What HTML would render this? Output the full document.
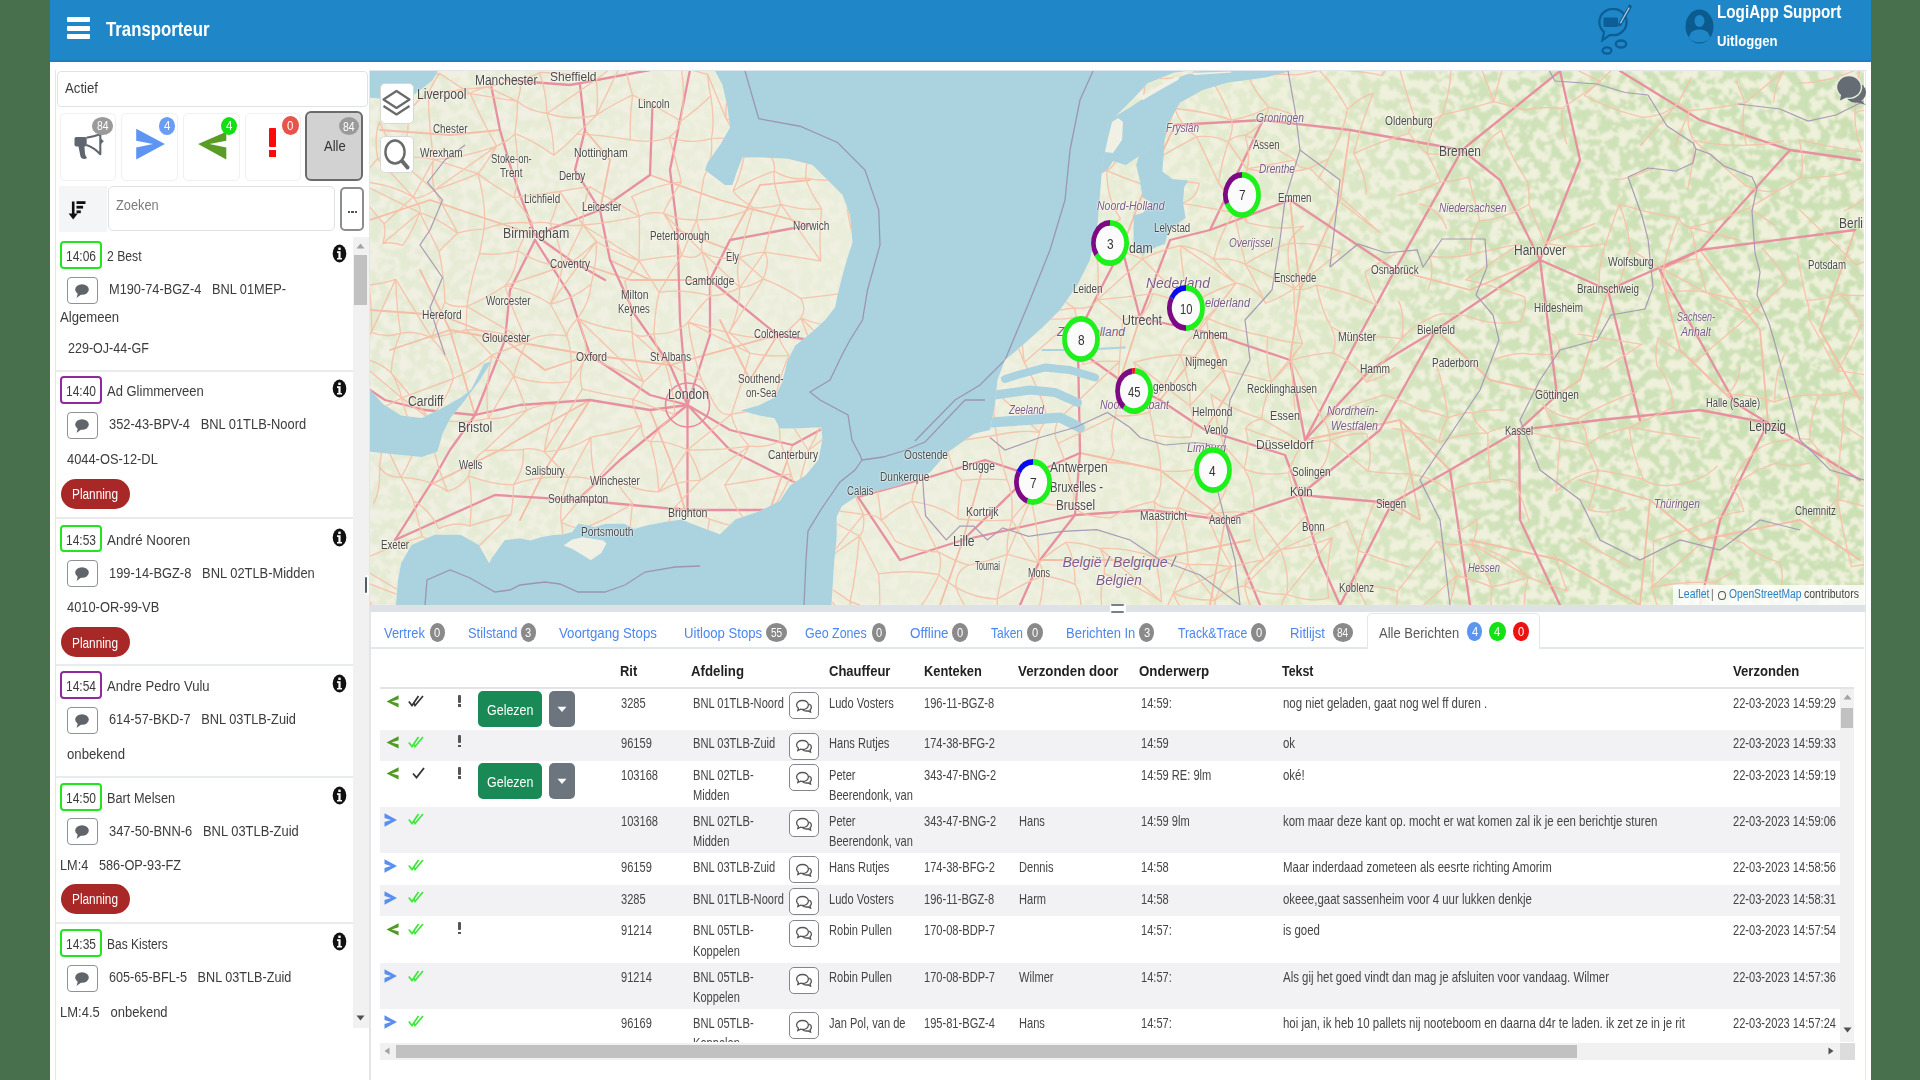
<!DOCTYPE html>
<html><head><meta charset="utf-8"><title>Transporteur</title><style>
*{margin:0;padding:0;box-sizing:border-box}
html,body{width:1920px;height:1080px;overflow:hidden}
body{position:relative;background:#48704c;font-family:"Liberation Sans",sans-serif}
.t{position:absolute;white-space:pre;line-height:1;transform-origin:0 0}
</style></head><body>
<div style="position:absolute;left:50px;top:0px;width:1821px;height:1080px;background:#fff"></div>
<div style="position:absolute;left:50px;top:0px;width:1821px;height:62px;background:#1f87c8"></div>
<div style="position:absolute;left:50px;top:60px;width:1821px;height:2px;background:#1a7fc2"></div>
<div style="position:absolute;left:67px;top:17px;width:23px;height:5px;background:#fff;border-radius:1px"></div>
<div style="position:absolute;left:67px;top:25.5px;width:23px;height:5px;background:#fff;border-radius:1px"></div>
<div style="position:absolute;left:67px;top:34.3px;width:23px;height:5px;background:#fff;border-radius:1px"></div>
<div class="t" style="left:106px;top:18.6px;font-size:20px;color:#fff;font-weight:bold;transform:scaleX(0.8382);">Transporteur</div>
<svg style="position:absolute;left:1590px;top:0" width="50" height="60" viewBox="0 0 50 60">
<g fill="none" stroke="#0c5f96" stroke-width="2.3">
<path d="M23 8.8c-7.6 0-13.6 5.9-13.6 13.2 0 4 1.7 7.5 4.6 10l-1.6 8.2 7.6-5.3c0.9 0.2 2 0.3 3 0.3 7.6 0 13.6-5.9 13.6-13.2S30.6 8.8 23 8.8Z"/>
<ellipse cx="17" cy="50.5" rx="4.4" ry="3.2"/>
<ellipse cx="31" cy="44" rx="5.2" ry="3.5"/>
</g>
<rect x="13.5" y="17.5" width="14.5" height="9.5" rx="1.2" fill="#0c5f96"/>
<path d="M29.8 24.5 L40 6.5" stroke="#0c5f96" stroke-width="3.6" stroke-linecap="round"/>
<path d="M30.4 23.3 L39.2 7.6" stroke="#b7c4cf" stroke-width="1.3"/>
</svg>
<svg style="position:absolute;left:1684px;top:9" width="32" height="36" viewBox="0 0 32 36">
<ellipse cx="15.5" cy="17.5" rx="14" ry="17" fill="#0b5b8f"/>
<ellipse cx="15.5" cy="12" rx="5" ry="6" fill="#1f87c8"/>
<path d="M4.8 28.5 C6.5 22.5 10 20.5 15.5 20.5 C21 20.5 24.5 22.5 26.2 28.5 C23.5 32.3 19.8 33.4 15.5 33.4 C11.2 33.4 7.5 32.3 4.8 28.5Z" fill="#1f87c8"/>
</svg>
<div class="t" style="left:1717px;top:3.45px;font-size:18px;color:#fff;font-weight:bold;transform:scaleX(0.8458);">LogiApp Support</div>
<div class="t" style="left:1717px;top:33.15px;font-size:15px;color:#fff;font-weight:bold;transform:scaleX(0.8748);">Uitloggen</div>
<svg style="position:absolute;left:370px;top:71px" width="1494" height="534" viewBox="370 71 1494 534"><rect x="370" y="71" width="1494" height="534" fill="#aad3df"/><g fill="none" stroke="#9a8fae" stroke-width="1.3" opacity="0.9"><polyline points="745,71 758.75,118.75 800,126.25 837.5,142.5 865,170 878.75,210 880,245 867.5,290 862.5,320 850,340 842,355 830,380 810,392 820,400 848,415 852,440 860,455 862,460 855,470 840,482 822,508 808,531 806,560 804,605"/><polyline points="862,460 883,457 903,451 925,442 965,400 985,400"/><polyline points="1093,71 1080,100 1070,150 1065,200 1050,250 1030,300 1005,360 980,385 955,400 915,441"/><polyline points="425,605 427,580 450,570 470,578 495,592 510,590 520,585 545,582 560,584 578,592 605,592 625,585 645,572 675,567 700,566"/></g><polygon points="370,71 715,71 722.5,85 727.5,107.5 730,127.5 720,145 707.5,162.5 705,170 715,177.5 725,185 732.5,185 737.5,170 742.5,157.5 762.5,157.5 787.5,158.75 812.5,165 825,177.5 842.5,195 850,215 852.5,242.5 847.5,257.5 842.5,275 837.5,295 835,307.5 825,320 812,332 795.2,345.6 787.4,361.1 782.2,381.9 774.5,397.4 758.9,405.2 740.7,410.4 758.9,415.6 774.5,418.2 779.6,428.5 795.2,428.5 821.1,427.2 822.4,438.9 818.5,459.6 805.6,475.2 790,485.6 779.6,501.1 758.9,511.5 735.6,519.3 720,534.2 697.1,525.8 681.5,519.6 665.8,521.7 645,525.8 634.6,529 624.2,523.75 613.75,523.75 605.4,523.75 595,526.9 584.6,524.8 578.3,523.75 572.1,532.1 563.75,534.2 551.25,535.2 540.8,537.3 530.4,540.4 520,538.3 504.8,540 491.8,558.1 489.2,563.3 478.9,545.1 460.7,534.8 434.8,534.8 411.5,545.1 401.1,563.3 398,580 395.9,605 370,605 370,451.8 395.9,454.4 421.8,457 437.4,451.8 442.6,433.7 450.4,418.1 463.3,402.5 480,380 491.8,361.1 484,363.7 471.1,389.6 460.7,397.4 442.6,407.8 421.8,418.1 401.1,415.5 383,403.9 370,389.6" fill="#f1f0e4"/><polygon points="370,71 437.5,71 432.5,80 420,90 410,97.5 395,100 370,97.5" fill="#aad3df"/><polygon points="563.75,545.6 572.1,539.4 582.5,537.3 603.3,540.4 606.5,543.5 601.25,552.9 590.8,560.2 582.5,555 572.1,548.75" fill="#f1f0e4"/><polygon points="1188,71 1174,72.75 1147.8,83.3 1135,97 1116,116 1107.5,125 1105,150 1102,170 1100,195 1097.5,225 1090,260 1077.5,285 1060,310 1042.5,327.5 1020,347.5 1005,360 997.5,380 995,405 990,430 974.1,433.7 948.2,451.9 930,472.6 898.9,485.6 878.2,490.7 857.4,495.9 841.9,506.3 836.7,516.7 836.7,537.4 834.1,563.3 831.5,605 1864,605 1864,71" fill="#f1f0e4"/><polygon points="1116,116 1130,107.5 1145,97.5 1165,85 1185,75 1202.5,71 1290,71 1265,77.5 1227.5,82.5 1202.5,90 1180,102.5 1170,120 1164.8,137.8 1154.4,146.8 1138.9,155.9 1125.9,165 1113,161 1107.8,168.9 1100,175 1100,120" fill="#aad3df"/><polygon points="1164.8,136 1163.5,155.9 1162.2,171.5 1172.6,179.2 1188.1,180.5 1184.2,187 1182.9,202.6 1185.5,218.1 1177.7,223.3 1167.4,233.7 1164.8,244 1157,246.6 1142.8,254.4 1133.7,251.8 1133.7,215.5 1142.8,212.9 1151.8,202.6 1142.8,197.4 1140.2,181.8 1136.3,165 1138.9,155.9 1154.4,146.8" fill="#aad3df"/><polygon points="1105,152 1108,138 1112,122 1118,118 1123,122 1122,140 1113,153" fill="#f1f0e4"/><polygon points="1140,97 1155,88 1175,77 1180,76 1178,80 1160,90 1143,100" fill="#f1f0e4"/><polygon points="1190,73 1230,71.5 1232,72.5 1195,75" fill="#f1f0e4"/></svg>
<svg style="position:absolute;left:370px;top:71px" width="1494" height="534" viewBox="370 71 1494 534"><defs><clipPath id="landclip"><polygon points="370,71 715,71 722.5,85 727.5,107.5 730,127.5 720,145 707.5,162.5 705,170 715,177.5 725,185 732.5,185 737.5,170 742.5,157.5 762.5,157.5 787.5,158.75 812.5,165 825,177.5 842.5,195 850,215 852.5,242.5 847.5,257.5 842.5,275 837.5,295 835,307.5 825,320 812,332 795.2,345.6 787.4,361.1 782.2,381.9 774.5,397.4 758.9,405.2 740.7,410.4 758.9,415.6 774.5,418.2 779.6,428.5 795.2,428.5 821.1,427.2 822.4,438.9 818.5,459.6 805.6,475.2 790,485.6 779.6,501.1 758.9,511.5 735.6,519.3 720,534.2 697.1,525.8 681.5,519.6 665.8,521.7 645,525.8 634.6,529 624.2,523.75 613.75,523.75 605.4,523.75 595,526.9 584.6,524.8 578.3,523.75 572.1,532.1 563.75,534.2 551.25,535.2 540.8,537.3 530.4,540.4 520,538.3 504.8,540 491.8,558.1 489.2,563.3 478.9,545.1 460.7,534.8 434.8,534.8 411.5,545.1 401.1,563.3 398,580 395.9,605 370,605 370,451.8 395.9,454.4 421.8,457 437.4,451.8 442.6,433.7 450.4,418.1 463.3,402.5 480,380 491.8,361.1 484,363.7 471.1,389.6 460.7,397.4 442.6,407.8 421.8,418.1 401.1,415.5 383,403.9 370,389.6"/><polygon points="1188,71 1174,72.75 1147.8,83.3 1135,97 1116,116 1107.5,125 1105,150 1102,170 1100,195 1097.5,225 1090,260 1077.5,285 1060,310 1042.5,327.5 1020,347.5 1005,360 997.5,380 995,405 990,430 974.1,433.7 948.2,451.9 930,472.6 898.9,485.6 878.2,490.7 857.4,495.9 841.9,506.3 836.7,516.7 836.7,537.4 834.1,563.3 831.5,605 1864,605 1864,71"/></clipPath><filter id="forest" x="0" y="0" width="100%" height="100%" color-interpolation-filters="sRGB"><feTurbulence type="fractalNoise" baseFrequency="0.1" numOctaves="4" seed="7"/><feColorMatrix type="matrix" values="0 0 0 0 0.78  0 0 0 0 0.87  0 0 0 0 0.69  1 0 0 0 0"/><feComponentTransfer><feFuncA type="discrete" tableValues="0 0 0 0 0 1 1 1 1 1"/></feComponentTransfer><feGaussianBlur stdDeviation="1.1"/></filter><linearGradient id="fgrad" x1="370" y1="0" x2="1864" y2="0" gradientUnits="userSpaceOnUse"><stop offset="0" stop-color="#fff" stop-opacity="0.3"/><stop offset="0.2" stop-color="#fff" stop-opacity="0.15"/><stop offset="0.45" stop-color="#fff" stop-opacity="0.12"/><stop offset="0.6" stop-color="#fff" stop-opacity="0.35"/><stop offset="0.75" stop-color="#fff" stop-opacity="0.8"/><stop offset="1" stop-color="#fff" stop-opacity="0.9"/></linearGradient><mask id="fmask"><rect x="370" y="71" width="1494" height="534" fill="url(#fgrad)"/></mask></defs><g clip-path="url(#landclip)"><linearGradient id="tgrad" x1="370" y1="0" x2="1864" y2="0" gradientUnits="userSpaceOnUse"><stop offset="0" stop-color="#eef1d8" stop-opacity="0.15"/><stop offset="0.42" stop-color="#eef1d8" stop-opacity="0.25"/><stop offset="0.6" stop-color="#eef1d8" stop-opacity="0.6"/><stop offset="1" stop-color="#eef1d8" stop-opacity="0.85"/></linearGradient><rect x="370" y="71" width="1494" height="534" fill="url(#tgrad)"/><g mask="url(#fmask)"><rect x="370" y="71" width="1494" height="534" filter="url(#forest)"/></g><g fill="none" stroke-linecap="round" stroke-linejoin="round"><polyline points="370,220 430,200 490,220 535,235" stroke="#f5bda6" stroke-width="1.8"/><polyline points="370,310 440,315 505,340 590,355" stroke="#f5bda6" stroke-width="1.8"/><polyline points="590,355 670,365 777.5,335" stroke="#f5bda6" stroke-width="1.8"/><polyline points="380,130 450,135 500,130" stroke="#f5bda6" stroke-width="1.8"/><polyline points="650,175 720,200 810,225" stroke="#f5bda6" stroke-width="1.8"/><polyline points="570,260 630,280 710,280" stroke="#f5bda6" stroke-width="1.8"/><polyline points="590,400 545,470 520,520" stroke="#f5bda6" stroke-width="1.8"/><polyline points="505,340 545,370 590,355" stroke="#f5bda6" stroke-width="1.8"/><polyline points="730,240 760,185 810,180" stroke="#f5bda6" stroke-width="1.8"/><polyline points="430,485 500,450 590,400" stroke="#f5bda6" stroke-width="1.8"/><polyline points="650,410 670,460 685,510" stroke="#f5bda6" stroke-width="1.8"/><polyline points="677.5,230 730,250" stroke="#f5bda6" stroke-width="1.8"/><polyline points="420,270 450,330 475,415" stroke="#f5bda6" stroke-width="1.8"/><polyline points="390,350 450,330 505,340" stroke="#f5bda6" stroke-width="1.8"/><polyline points="600,210 610,160 585,130" stroke="#f5bda6" stroke-width="1.8"/><polyline points="720,320 750,380 777.5,335" stroke="#f5bda6" stroke-width="1.8"/><polyline points="792.5,445 770,510" stroke="#f5bda6" stroke-width="1.8"/><polyline points="610,260 650,280 710,280" stroke="#f5bda6" stroke-width="1.8"/><polyline points="1160,400 1200,350 1210,333" stroke="#f5bda6" stroke-width="1.8"/><polyline points="1120,380 1140,318" stroke="#f5bda6" stroke-width="1.8"/><polyline points="1175,125 1140,200 1122,248" stroke="#f5bda6" stroke-width="1.8"/><polyline points="1080,453 1160,470 1225,520" stroke="#f5bda6" stroke-width="1.8"/><polyline points="1040,560 1150,560 1250,540" stroke="#f5bda6" stroke-width="1.8"/><polyline points="985,460 963,540 940,605" stroke="#f5bda6" stroke-width="1.8"/><polyline points="1305,440 1400,420 1450,470" stroke="#f5bda6" stroke-width="1.8"/><polyline points="1400,420 1420,520 1392,503" stroke="#f5bda6" stroke-width="1.8"/><polyline points="1210,333 1230,390 1205,430" stroke="#f5bda6" stroke-width="1.8"/><polyline points="1290,200 1300,290 1290,360" stroke="#f5bda6" stroke-width="1.8"/><polyline points="1395,270 1470,290 1540,260" stroke="#f5bda6" stroke-width="1.8"/><polyline points="1436,330 1490,380 1557,395" stroke="#f5bda6" stroke-width="1.8"/><polyline points="1608,290 1580,380 1557,395" stroke="#f5bda6" stroke-width="1.8"/><polyline points="1660,270 1680,350 1735,403" stroke="#f5bda6" stroke-width="1.8"/><polyline points="1700,250 1760,330 1768,423" stroke="#f5bda6" stroke-width="1.8"/><polyline points="1855,230 1820,330 1860,400" stroke="#f5bda6" stroke-width="1.8"/><polyline points="1650,500 1700,540 1800,520 1860,560" stroke="#f5bda6" stroke-width="1.8"/><polyline points="1580,480 1650,500 1640,605" stroke="#f5bda6" stroke-width="1.8"/><polyline points="1470,540 1560,560 1640,605" stroke="#f5bda6" stroke-width="1.8"/><polyline points="1225,520 1210,605" stroke="#f5bda6" stroke-width="1.8"/><polyline points="1300,290 1340,200 1350,130" stroke="#f5bda6" stroke-width="1.8"/><polyline points="580,85 585,130 575,170 600,210 610,260 635,315 670,365 687.5,405" stroke="#e8909f" stroke-width="2.3"/><polyline points="490,80 500,130 510,165 520,195 535,235 570,260 605,280" stroke="#e8909f" stroke-width="2.3"/><polyline points="535,240 510,290 505,340 475,415 450,450 430,485 395,540" stroke="#e8909f" stroke-width="2.3"/><polyline points="425,410 475,415 520,405 590,400 650,410 687.5,405" stroke="#e8909f" stroke-width="2.3"/><polyline points="535,240 570,295 590,355 650,395 687.5,405" stroke="#e8909f" stroke-width="2.3"/><polyline points="687.5,405 680,320 677.5,230 670,170 690,70" stroke="#e8909f" stroke-width="2.3"/><polyline points="687.5,405 710,335 710,280 730,240 810,225" stroke="#e8909f" stroke-width="2.3"/><polyline points="687.5,405 730,430 792.5,445 820,430" stroke="#e8909f" stroke-width="2.3"/><polyline points="687.5,405 730,450 770,470 810,490" stroke="#e8909f" stroke-width="2.3"/><polyline points="687.5,405 620,460 577.5,500" stroke="#e8909f" stroke-width="2.3"/><polyline points="687.5,405 687.5,510" stroke="#e8909f" stroke-width="2.3"/><polyline points="710,280 777.5,335 810,340" stroke="#e8909f" stroke-width="2.3"/><polyline points="505,80 570,85 650,70" stroke="#e8909f" stroke-width="2.3"/><polyline points="535,235 600,210 650,175 652.5,105" stroke="#e8909f" stroke-width="2.3"/><polyline points="395,540 495,495 577.5,500 685,510 770,510" stroke="#e8909f" stroke-width="2.3"/><polyline points="425,410 385,400 370,390" stroke="#e8909f" stroke-width="2.3"/><polyline points="1122,248 1140,318 1210,333 1290,360 1305,440" stroke="#e8909f" stroke-width="2.3"/><polyline points="1122,248 1100,290 1080,330 1078,350 1080,453 1075,515 1040,560 1020,605" stroke="#e8909f" stroke-width="2.3"/><polyline points="1078,350 1120,380 1160,400 1205,430 1285,455 1300,495 1320,560 1340,605" stroke="#e8909f" stroke-width="2.3"/><polyline points="1080,453 1030,475 985,460 920,480 858,497" stroke="#e8909f" stroke-width="2.3"/><polyline points="1075,515 1150,510 1225,520 1300,495" stroke="#e8909f" stroke-width="2.3"/><polyline points="963,540 1030,475" stroke="#e8909f" stroke-width="2.3"/><polyline points="963,540 1075,515" stroke="#e8909f" stroke-width="2.3"/><polyline points="858,497 900,560 963,540" stroke="#e8909f" stroke-width="2.3"/><polyline points="1140,318 1170,240 1210,230 1263,120" stroke="#e8909f" stroke-width="2.3"/><polyline points="1175,125 1263,120 1350,130 1462,150 1560,71" stroke="#e8909f" stroke-width="2.3"/><polyline points="1210,230 1290,200 1395,270 1462,150" stroke="#e8909f" stroke-width="2.3"/><polyline points="1395,270 1357,340 1305,440" stroke="#e8909f" stroke-width="2.3"/><polyline points="1540,260 1436,330 1370,370 1305,440" stroke="#e8909f" stroke-width="2.3"/><polyline points="1540,260 1608,290 1700,250 1855,230" stroke="#e8909f" stroke-width="2.3"/><polyline points="1540,260 1557,395 1519,430 1450,470 1392,503 1300,495" stroke="#e8909f" stroke-width="2.3"/><polyline points="1768,423 1735,403 1660,270 1700,250 1790,150 1860,160" stroke="#e8909f" stroke-width="2.3"/><polyline points="1540,260 1500,180 1462,150" stroke="#e8909f" stroke-width="2.3"/><polyline points="1540,260 1580,160 1560,71" stroke="#e8909f" stroke-width="2.3"/><polyline points="1519,430 1600,420 1700,410 1768,423 1860,480" stroke="#e8909f" stroke-width="2.3"/><polyline points="1519,430 1520,520 1560,605" stroke="#e8909f" stroke-width="2.3"/><polyline points="1450,470 1470,605" stroke="#e8909f" stroke-width="2.3"/><polyline points="1768,423 1720,520 1700,605" stroke="#e8909f" stroke-width="2.3"/><polyline points="1608,290 1640,420" stroke="#e8909f" stroke-width="2.3"/><polyline points="1300,495 1380,430 1436,330" stroke="#e8909f" stroke-width="2.3"/><polyline points="1225,520 1260,605" stroke="#e8909f" stroke-width="2.3"/><polyline points="1340,605 1392,503" stroke="#e8909f" stroke-width="2.3"/><polyline points="1620,71 1700,120 1790,150" stroke="#e8909f" stroke-width="2.3"/><path d="M373.9 78.7Q381.3 84.2 400.3 85.8M379.4 122.2Q394.0 117.5 408.3 113.7M379.4 122.2Q373.7 137.2 377.7 158.5M379.4 122.2L397.6 159.1M377.7 158.5Q384.0 155.9 397.6 159.1M377.7 158.5Q363.5 175.7 354.9 180.9M377.7 158.5L413.1 196.9M354.9 180.9Q390.2 183.1 413.1 196.9M354.9 180.9Q365.5 204.9 384.2 223.8M354.9 180.9L419.6 212.6M384.2 223.8Q386.1 233.0 382.8 243.6M384.2 223.8L413.1 196.9M382.8 243.6Q389.7 241.2 402.6 245.3M382.8 243.6L419.6 212.6M369.0 284.9Q387.2 283.0 395.7 279.1M369.0 284.9Q372.4 310.2 371.4 332.4M371.4 332.4Q385.2 338.1 400.6 333.3M371.4 332.4Q361.0 346.6 354.4 357.9M371.4 332.4L395.7 279.1M354.4 357.9Q376.0 358.9 391.1 372.7M354.4 357.9Q362.3 393.3 362.9 417.3M354.4 357.9L401.8 397.9M362.9 417.3Q379.4 409.8 401.8 397.9M362.9 417.3Q370.1 419.0 378.5 430.1M378.5 430.1Q402.8 440.0 417.2 440.4M378.5 430.1Q383.9 443.8 379.5 466.4M378.5 430.1L401.1 477.4M379.5 466.4Q384.9 477.3 401.1 477.4M379.5 466.4Q380.6 490.9 373.8 503.1M354.1 563.9Q387.5 547.2 422.2 536.7M354.1 563.9Q356.1 577.9 360.7 579.9M354.1 563.9L415.0 600.0M360.7 579.9Q387.0 591.6 415.0 600.0M360.7 579.9Q370.1 602.4 385.4 637.9M385.4 637.9Q388.5 637.7 391.6 635.2M400.3 85.8Q417.3 77.4 439.7 73.5M400.3 85.8Q399.5 105.8 408.3 113.7M408.3 113.7Q418.6 97.2 428.3 93.5M408.3 113.7Q409.8 140.4 397.6 159.1M397.6 159.1Q410.4 155.0 433.8 159.6M397.6 159.1L434.3 190.2M413.1 196.9Q418.2 200.5 434.3 190.2M413.1 196.9Q422.2 209.4 419.6 212.6M413.1 196.9L433.8 159.6M419.6 212.6Q435.5 216.8 457.7 233.1M419.6 212.6Q414.2 228.8 402.6 245.3M419.6 212.6L439.0 251.4M395.7 279.1Q396.5 307.2 400.6 333.3M395.7 279.1L431.5 337.9M400.6 333.3Q415.5 330.3 431.5 337.9M400.6 333.3Q392.3 351.2 391.1 372.7M391.1 372.7Q397.8 382.8 401.8 397.9M391.1 372.7L429.2 418.3M401.8 397.9Q420.5 412.2 429.2 418.3M401.8 397.9Q404.6 412.3 417.2 440.4M401.8 397.9L453.5 378.5M417.2 440.4Q421.3 434.3 430.9 435.9M417.2 440.4Q411.5 460.1 401.1 477.4M401.1 477.4Q430.2 479.1 447.5 491.4M401.1 477.4Q410.2 492.4 413.5 500.8M413.5 500.8Q428.9 508.8 438.9 528.6M413.5 500.8Q417.4 519.4 422.2 536.7M422.2 536.7Q433.5 541.7 445.4 546.0M415.0 600.0Q428.7 586.7 438.1 578.7M415.0 600.0Q402.9 619.0 391.6 635.2M415.0 600.0L445.4 546.0M391.6 635.2Q411.9 620.7 430.5 614.8M439.7 73.5Q434.0 80.6 428.3 93.5M439.7 73.5L470.2 93.6M428.3 93.5Q447.8 99.3 470.2 93.6M428.3 93.5Q429.0 129.3 433.8 159.6M428.3 93.5L487.1 86.9M433.8 159.6Q462.1 158.3 496.6 146.1M433.8 159.6Q430.6 174.6 434.3 190.2M433.8 159.6L478.0 173.6M434.3 190.2Q459.2 181.6 478.0 173.6M434.3 190.2Q449.8 218.1 457.7 233.1M434.3 190.2L496.6 146.1M457.7 233.1Q473.1 228.9 484.0 229.4M457.7 233.1Q446.5 243.9 439.0 251.4M439.0 251.4Q444.8 279.4 444.8 301.8M444.8 301.8Q449.6 307.6 466.8 306.3M444.8 301.8Q438.0 320.2 431.5 337.9M431.5 337.9Q454.9 333.1 466.0 329.8M431.5 337.9Q449.4 355.8 453.5 378.5M453.5 378.5Q476.6 369.0 491.8 355.2M453.5 378.5Q445.4 403.4 429.2 418.3M429.2 418.3Q461.6 424.7 488.4 418.4M429.2 418.3Q434.6 421.0 430.9 435.9M430.9 435.9Q436.9 467.4 447.5 491.4M447.5 491.4Q463.1 486.6 468.4 475.9M438.9 528.6Q455.2 521.0 469.8 526.0M445.4 546.0Q455.6 554.3 474.4 550.5M445.4 546.0Q439.0 566.7 438.1 578.7M438.1 578.7Q473.1 589.2 497.0 600.3M438.1 578.7Q430.9 594.8 430.5 614.8M438.1 578.7L496.2 624.5M430.5 614.8Q460.8 623.4 496.2 624.5M487.1 86.9Q499.4 84.4 517.6 78.3M487.1 86.9Q473.3 90.6 470.2 93.6M487.1 86.9L517.3 101.3M470.2 93.6Q488.2 96.6 517.3 101.3M470.2 93.6Q484.0 125.0 496.6 146.1M496.6 146.1Q511.3 138.8 514.9 133.7M496.6 146.1Q483.9 166.7 478.0 173.6M478.0 173.6Q489.1 182.9 514.1 197.6M478.0 173.6Q486.7 207.2 484.0 229.4M484.0 229.4Q505.6 220.4 532.7 223.1M484.0 229.4Q482.1 240.8 479.6 253.5M479.6 253.5Q496.1 256.0 518.0 250.8M479.6 253.5Q472.1 274.4 466.8 306.3M466.8 306.3Q486.1 298.4 504.9 285.7M466.8 306.3Q466.7 316.2 466.0 329.8M466.8 306.3L527.0 341.8M466.0 329.8Q495.2 328.9 527.0 341.8M466.0 329.8Q476.7 338.8 491.8 355.2M491.8 355.2Q507.6 365.4 513.6 376.2M491.8 355.2Q484.3 392.3 488.4 418.4M491.8 355.2L527.0 341.8M488.4 418.4Q501.2 419.8 526.8 410.2M488.4 418.4L513.6 376.2M485.2 450.2Q508.9 451.1 523.2 449.3M485.2 450.2Q473.1 457.0 468.4 475.9M485.2 450.2L526.8 410.2M468.4 475.9Q496.6 485.8 513.6 484.5M468.4 475.9Q473.1 495.8 469.8 526.0M469.8 526.0Q495.8 517.4 511.0 514.5M474.4 550.5L511.0 514.5M497.0 600.3Q506.4 607.5 511.4 603.3M497.0 600.3Q490.2 610.3 496.2 624.5M497.0 600.3L522.8 628.6M496.2 624.5Q509.7 624.8 522.8 628.6M517.6 78.3Q534.8 76.8 539.4 72.5M517.6 78.3Q523.5 83.3 517.3 101.3M517.3 101.3Q527.9 110.8 547.0 113.5M517.3 101.3Q517.7 117.2 514.9 133.7M514.9 133.7Q530.4 139.0 553.8 155.1M514.9 133.7Q520.8 172.0 514.1 197.6M514.1 197.6Q540.8 194.5 559.7 191.5M514.1 197.6Q528.8 216.3 532.7 223.1M532.7 223.1Q543.4 221.4 550.1 223.6M532.7 223.1Q522.6 238.4 518.0 250.8M518.0 250.8Q539.9 264.9 562.6 266.5M518.0 250.8Q515.5 274.3 504.9 285.7M504.9 285.7Q530.5 290.6 550.2 304.0M504.9 285.7Q511.1 307.0 527.0 341.8M504.9 285.7L562.6 266.5M527.0 341.8Q540.3 332.2 566.8 336.0M527.0 341.8Q518.3 358.1 513.6 376.2M513.6 376.2Q538.0 385.7 570.2 381.6M513.6 376.2Q521.3 395.2 526.8 410.2M526.8 410.2Q544.1 402.5 555.6 404.9M523.2 449.3Q531.3 447.3 544.3 451.8M523.2 449.3Q525.1 469.1 513.6 484.5M513.6 484.5Q538.0 475.0 569.0 477.3M513.6 484.5Q513.5 500.9 511.0 514.5M526.6 558.1Q542.7 553.4 562.4 541.5M526.6 558.1Q513.7 587.1 511.4 603.3M511.4 603.3Q538.9 598.5 564.0 591.6M511.4 603.3Q511.9 619.2 522.8 628.6M511.4 603.3L560.3 623.5M522.8 628.6Q545.0 629.7 560.3 623.5M539.4 72.5Q571.3 72.2 596.0 79.8M539.4 72.5Q545.9 89.8 547.0 113.5M547.0 113.5Q572.9 121.1 596.4 115.1M547.0 113.5Q553.7 133.4 553.8 155.1M547.0 113.5L596.0 79.8M553.8 155.1Q566.0 146.1 576.9 134.1M559.7 191.5Q576.7 187.9 590.1 186.8M559.7 191.5Q557.5 206.0 550.1 223.6M559.7 191.5L583.0 225.0M550.1 223.6Q569.2 226.5 583.0 225.0M550.1 223.6Q560.8 242.6 562.6 266.5M562.6 266.5Q578.4 259.4 596.2 241.3M562.6 266.5Q556.9 290.3 550.2 304.0M562.6 266.5L583.0 225.0M550.2 304.0Q571.1 300.2 591.1 284.2M550.2 304.0Q560.8 322.0 566.8 336.0M550.2 304.0L596.2 241.3M566.8 336.0Q567.0 329.7 577.7 318.3M566.8 336.0Q573.4 353.9 570.2 381.6M570.2 381.6Q581.8 367.0 586.2 356.8M570.2 381.6Q561.1 400.0 555.6 404.9M555.6 404.9Q546.7 431.6 544.3 451.8M544.3 451.8Q569.1 450.9 590.9 437.2M544.3 451.8Q551.7 460.4 569.0 477.3M544.3 451.8L582.2 389.1M569.0 477.3Q580.5 475.7 595.6 480.9M569.0 477.3Q559.1 500.5 561.1 522.0M569.0 477.3L590.9 437.2M561.1 522.0Q572.7 529.0 583.6 527.9M561.1 522.0Q563.7 532.7 562.4 541.5M561.1 522.0L595.6 480.9M562.4 541.5Q574.3 549.9 576.0 549.0M562.4 541.5Q568.7 568.1 564.0 591.6M564.0 591.6Q569.0 592.6 584.9 586.1M564.0 591.6Q561.7 604.3 560.3 623.5M560.3 623.5Q565.9 636.8 579.7 636.6M560.3 623.5L584.9 586.1M596.0 79.8Q613.7 66.4 625.0 56.2M596.0 79.8Q598.7 94.2 596.4 115.1M596.4 115.1Q610.6 105.7 632.6 95.0M596.4 115.1Q592.2 119.6 576.9 134.1M596.4 115.1L625.0 56.2M576.9 134.1Q598.2 134.4 630.4 139.9M590.1 186.8Q582.1 204.9 583.0 225.0M590.1 186.8L639.2 216.4M583.0 225.0Q606.4 223.2 639.2 216.4M583.0 225.0Q586.7 229.7 596.2 241.3M583.0 225.0L639.0 260.6M596.2 241.3Q611.7 251.3 639.0 260.6M596.2 241.3Q597.4 259.5 591.1 284.2M591.1 284.2Q590.4 300.9 577.7 318.3M577.7 318.3Q601.5 328.8 632.1 332.0M577.7 318.3Q587.3 340.4 586.2 356.8M577.7 318.3L643.6 382.0M586.2 356.8Q613.7 367.6 643.6 382.0M586.2 356.8Q577.2 372.5 582.2 389.1M582.2 389.1Q609.9 395.6 632.5 399.2M590.9 437.2Q622.4 431.8 641.6 425.0M590.9 437.2Q590.5 461.3 595.6 480.9M595.6 480.9L641.6 425.0M583.6 527.9Q605.9 520.3 632.7 503.5M583.6 527.9Q576.4 532.8 576.0 549.0M583.6 527.9L633.1 564.5M576.0 549.0Q608.0 552.5 633.1 564.5M576.0 549.0Q582.1 562.4 584.9 586.1M584.9 586.1Q585.5 608.1 579.7 636.6M579.7 636.6Q605.7 627.1 620.2 619.3M625.0 56.2Q649.0 62.7 681.1 67.2M625.0 56.2Q625.1 72.1 632.6 95.0M632.6 95.0Q662.6 109.7 680.8 121.2M632.6 95.0Q629.4 117.6 630.4 139.9M630.4 139.9Q651.9 143.7 669.1 137.3M631.6 196.7Q657.3 184.7 681.4 181.9M631.6 196.7Q635.4 202.3 639.2 216.4M639.2 216.4Q648.9 211.2 663.3 213.2M639.2 216.4Q639.8 235.7 639.0 260.6M639.0 260.6Q665.6 256.4 681.5 255.7M639.0 260.6Q632.8 273.4 624.8 281.5M639.0 260.6L659.2 292.3M624.8 281.5Q631.0 303.4 632.1 332.0M632.1 332.0Q638.5 339.4 653.9 333.9M632.1 332.0Q632.8 360.4 643.6 382.0M632.1 332.0L664.2 360.4M643.6 382.0Q660.7 367.1 664.2 360.4M643.6 382.0Q636.6 397.6 632.5 399.2M632.5 399.2Q648.6 406.0 675.0 414.5M632.5 399.2Q632.2 406.4 641.6 425.0M641.6 425.0Q639.9 436.4 650.4 442.0M616.5 480.1Q639.5 492.0 658.8 491.9M616.5 480.1Q618.6 486.8 632.7 503.5M632.7 503.5Q627.4 536.6 633.1 564.5M633.1 564.5Q649.5 556.7 658.6 541.0M633.1 564.5Q628.1 575.5 625.0 586.8M625.0 586.8Q652.9 591.1 681.6 582.4M625.0 586.8Q617.5 605.5 620.2 619.3M625.0 586.8L658.6 541.0M620.2 619.3L681.6 582.4M681.1 67.2Q692.7 70.3 707.6 74.3M681.1 67.2Q686.0 96.0 680.8 121.2M680.8 121.2Q699.9 107.0 710.8 95.8M680.8 121.2Q679.2 130.4 669.1 137.3M669.1 137.3Q692.6 144.8 711.3 138.6M669.1 137.3Q675.8 160.2 681.4 181.9M681.4 181.9Q669.1 200.1 663.3 213.2M663.3 213.2Q678.2 220.5 696.5 220.0M663.3 213.2Q676.9 231.6 681.5 255.7M663.3 213.2L701.9 251.6M681.5 255.7Q696.9 260.6 701.9 251.6M681.5 255.7Q666.7 279.3 659.2 292.3M681.5 255.7L696.5 220.0M659.2 292.3Q685.0 288.9 710.8 295.9M659.2 292.3Q655.1 307.8 653.9 333.9M653.9 333.9Q676.8 334.4 688.2 322.1M653.9 333.9Q655.9 350.8 664.2 360.4M664.2 360.4Q685.6 373.9 701.6 380.3M664.2 360.4Q673.1 385.2 675.0 414.5M675.0 414.5Q659.7 425.6 650.4 442.0M650.4 442.0Q663.4 439.2 687.5 449.9M650.4 442.0Q657.8 466.3 658.8 491.9M658.8 491.9Q678.4 479.7 700.7 480.4M658.8 491.9L687.5 449.9M675.0 506.9Q696.3 513.2 709.7 519.2M675.0 506.9Q670.3 518.9 658.6 541.0M675.0 506.9L700.7 480.4M658.6 541.0Q684.0 557.5 702.4 565.2M658.6 541.0Q668.5 564.9 681.6 582.4M681.6 582.4Q681.8 609.2 669.5 625.2M681.6 582.4L702.4 565.2M669.5 625.2Q691.0 616.1 714.3 616.3M707.6 74.3Q709.2 91.4 710.8 95.8M707.6 74.3L726.1 118.8M710.8 95.8Q715.0 124.1 711.3 138.6M711.3 138.6Q729.2 136.8 746.2 142.9M711.3 138.6Q713.6 158.1 704.1 176.8M704.1 176.8Q700.2 197.7 696.5 220.0M696.5 220.0Q730.5 219.2 753.1 207.6M696.5 220.0Q702.3 238.8 701.9 251.6M701.9 251.6Q716.5 260.9 739.3 257.6M701.9 251.6Q710.8 278.4 710.8 295.9M701.9 251.6L739.9 287.6M710.8 295.9Q727.4 294.7 739.9 287.6M710.8 295.9Q700.9 304.3 688.2 322.1M688.2 322.1Q709.4 328.4 728.9 332.7M688.2 322.1Q691.6 349.9 701.6 380.3M688.2 322.1L750.0 353.2M701.6 380.3Q709.4 395.5 715.4 405.5M715.4 405.5Q721.9 416.4 731.4 414.2M687.5 449.9Q716.2 450.8 749.3 446.2M687.5 449.9Q697.5 466.0 700.7 480.4M687.5 449.9L731.4 414.2M700.7 480.4L749.3 446.2M709.7 519.2Q727.1 525.7 755.3 530.9M709.7 519.2Q705.6 539.3 702.4 565.2M702.4 565.2Q719.9 549.0 746.4 537.6M702.4 565.2Q694.2 582.0 699.3 585.5M699.3 585.5Q719.8 581.8 750.9 580.0M699.3 585.5Q700.6 601.5 714.3 616.3M699.3 585.5L744.7 640.5M714.3 616.3Q734.3 623.9 744.7 640.5M733.5 81.6Q724.5 96.6 726.1 118.8M726.1 118.8Q750.6 126.2 770.4 121.4M726.1 118.8Q731.9 130.5 746.2 142.9M746.2 142.9Q762.7 148.3 765.8 148.5M746.2 142.9Q744.0 167.0 733.2 191.0M733.2 191.0Q749.7 179.5 774.2 171.2M733.2 191.0Q736.6 197.3 753.1 207.6M753.1 207.6Q766.4 208.8 780.9 204.4M753.1 207.6Q744.9 233.7 739.3 257.6M739.3 257.6Q754.8 252.7 764.5 252.1M739.3 257.6Q735.4 272.4 739.9 287.6M739.3 257.6L763.3 278.8M739.9 287.6Q751.1 286.9 763.3 278.8M739.9 287.6Q739.2 314.5 728.9 332.7M739.9 287.6L764.5 252.1M728.9 332.7Q749.1 339.3 779.4 337.8M728.9 332.7Q736.9 337.9 750.0 353.2M728.9 332.7L763.3 278.8M750.0 353.2Q770.9 357.1 789.1 355.3M750.0 353.2Q741.8 384.1 731.4 414.2M731.4 414.2Q757.6 411.2 774.8 398.1M731.4 414.2Q733.9 429.8 749.3 446.2M749.3 446.2Q768.2 448.1 780.2 440.7M749.3 446.2Q739.8 463.3 724.8 485.1M724.8 485.1Q763.1 479.2 791.0 474.0M724.8 485.1Q735.8 512.7 755.3 530.9M755.3 530.9Q752.1 533.7 746.4 537.6M746.4 537.6Q742.2 558.4 750.9 580.0M750.9 580.0Q760.4 594.9 777.2 602.1M750.9 580.0Q753.7 606.0 744.7 640.5M744.7 640.5Q760.7 630.8 778.8 629.9M783.8 59.3Q801.7 68.1 806.4 72.7M770.4 121.4Q788.3 123.4 806.1 116.0M770.4 121.4Q766.7 130.6 765.8 148.5M770.4 121.4L806.4 72.7M765.8 148.5Q786.7 143.5 814.5 133.3M765.8 148.5Q776.1 161.1 774.2 171.2M774.2 171.2Q791.1 181.3 805.5 177.9M774.2 171.2Q772.7 182.4 780.9 204.4M780.9 204.4Q805.7 211.3 821.6 208.7M780.9 204.4Q770.0 225.0 764.5 252.1M780.9 204.4L820.8 261.0M764.5 252.1Q790.4 255.9 820.8 261.0M764.5 252.1Q770.7 260.0 763.3 278.8M763.3 278.8Q782.6 285.9 800.7 298.4M779.4 337.8Q788.4 330.7 800.9 318.0M779.4 337.8Q781.2 345.1 789.1 355.3M789.1 355.3Q781.5 372.0 774.8 398.1M774.8 398.1Q804.3 397.9 826.1 403.4M774.8 398.1Q779.5 422.7 780.2 440.7M774.8 398.1L808.3 450.5M780.2 440.7Q784.3 452.1 791.0 474.0M791.0 474.0Q783.5 496.3 762.8 521.3M791.0 474.0L799.7 503.8M762.8 521.3Q775.0 506.7 799.7 503.8M762.8 521.3L798.9 485.2M765.8 556.2Q803.9 552.3 828.5 557.8M765.8 556.2Q767.7 575.1 777.2 602.1M777.2 602.1Q785.2 589.3 805.1 576.7M777.2 602.1Q782.0 621.7 778.8 629.9M778.8 629.9Q807.0 624.6 829.1 631.3M778.8 629.9L805.1 576.7M806.4 72.7Q809.6 94.3 806.1 116.0M806.1 116.0Q825.7 110.3 855.0 103.3M806.1 116.0Q813.1 122.4 814.5 133.3M806.1 116.0L861.3 59.5M814.5 133.3Q824.9 140.5 842.5 139.7M814.5 133.3Q807.1 149.6 805.5 177.9M805.5 177.9Q824.8 183.0 854.6 177.2M805.5 177.9Q809.6 191.9 821.6 208.7M821.6 208.7Q818.9 234.9 820.8 261.0M800.7 298.4Q827.8 295.5 860.7 290.9M800.7 298.4Q806.9 308.4 800.9 318.0M800.9 318.0Q827.6 329.1 862.3 330.6M800.9 318.0Q810.7 343.6 817.0 358.6M800.9 318.0L854.0 369.3M817.0 358.6Q831.3 366.8 854.0 369.3M817.0 358.6Q817.3 375.7 826.1 403.4M826.1 403.4Q822.1 427.9 808.3 450.5M826.1 403.4L854.0 369.3M808.3 450.5Q828.9 434.9 838.1 426.1M808.3 450.5Q804.6 461.6 798.9 485.2M798.9 485.2Q804.9 488.0 799.7 503.8M799.7 503.8Q830.9 510.3 863.5 514.4M799.7 503.8L859.3 536.0M828.5 557.8Q849.2 543.1 859.3 536.0M828.5 557.8Q816.9 564.6 805.1 576.7M828.5 557.8L863.5 514.4M805.1 576.7Q826.4 584.1 850.0 601.5M805.1 576.7L854.8 623.7M829.1 631.3Q839.9 620.9 854.8 623.7M861.3 59.5Q861.1 77.4 855.0 103.3M861.3 59.5L876.9 97.1M855.0 103.3Q872.3 99.6 876.9 97.1M855.0 103.3Q842.4 123.5 842.5 139.7M855.0 103.3L884.0 141.3M842.5 139.7Q866.2 138.3 884.0 141.3M842.5 139.7Q844.2 159.2 854.6 177.2M854.6 177.2Q850.6 190.8 847.3 207.4M847.3 207.4Q862.9 208.2 880.1 211.9M847.3 207.4Q850.0 231.8 861.6 260.7M847.3 207.4L877.2 249.2M861.6 260.7Q864.5 269.5 860.7 290.9M860.7 290.9Q864.6 293.1 879.5 292.4M860.7 290.9Q858.5 305.0 862.3 330.6M862.3 330.6Q861.5 334.6 873.0 343.6M862.3 330.6L883.8 381.0M854.0 369.3Q855.6 387.8 858.7 400.7M858.7 400.7Q879.6 411.0 894.0 409.6M858.7 400.7Q848.7 411.9 838.1 426.1M838.1 426.1Q862.7 446.2 887.1 455.3M838.1 426.1L894.0 409.6M841.5 463.3Q853.5 471.0 875.8 483.4M841.5 463.3Q852.5 490.8 863.5 514.4M863.5 514.4Q878.7 515.0 881.3 520.6M863.5 514.4Q865.0 531.9 859.3 536.0M859.3 536.0Q856.3 574.9 850.0 601.5M859.3 536.0L878.4 573.8M850.0 601.5Q851.3 616.7 854.8 623.7M850.0 601.5L879.4 612.5M854.8 623.7Q870.7 620.1 879.4 612.5M886.9 58.2Q911.3 66.3 921.8 86.2M886.9 58.2Q886.0 83.8 876.9 97.1M876.9 97.1Q902.3 101.9 920.7 102.0M876.9 97.1Q884.5 120.0 884.0 141.3M876.9 97.1L921.8 86.2M884.0 141.3Q898.5 134.0 924.0 138.1M884.0 141.3Q885.7 161.4 900.2 170.9M900.2 170.9Q916.1 181.5 932.4 189.0M900.2 170.9Q890.8 198.0 880.1 211.9M900.2 170.9L914.2 210.7M880.1 211.9Q891.7 204.5 914.2 210.7M880.1 211.9L932.4 189.0M877.2 249.2Q874.3 276.2 879.5 292.4M879.5 292.4Q907.4 287.9 929.7 290.8M879.5 292.4Q878.1 315.1 873.0 343.6M873.0 343.6Q909.8 335.6 940.2 314.2M873.0 343.6Q879.5 359.9 883.8 381.0M873.0 343.6L929.7 290.8M883.8 381.0Q897.4 377.7 910.9 375.9M883.8 381.0Q884.8 401.3 894.0 409.6M894.0 409.6Q901.6 405.4 922.1 389.4M887.1 455.3Q910.9 462.6 926.5 456.7M887.1 455.3Q888.1 468.9 875.8 483.4M875.8 483.4Q878.7 495.5 881.3 520.6M875.8 483.4L926.5 456.7M881.3 520.6Q898.1 506.4 912.0 501.3M881.3 520.6Q885.5 524.0 895.3 541.2M895.3 541.2Q919.3 552.7 937.8 551.7M878.4 573.8Q912.7 569.2 938.9 574.7M878.4 573.8Q880.5 590.6 879.4 612.5M879.4 612.5Q892.0 617.6 916.8 611.6M921.8 86.2Q944.9 78.3 958.7 56.9M921.8 86.2Q915.3 96.4 920.7 102.0M920.7 102.0Q942.1 105.8 954.2 105.0M920.7 102.0Q917.3 120.1 924.0 138.1M920.7 102.0L955.8 130.6M924.0 138.1Q923.5 165.2 932.4 189.0M914.2 210.7Q936.5 209.1 951.7 219.3M929.7 290.8Q939.4 282.3 948.7 287.0M929.7 290.8Q937.6 301.3 940.2 314.2M940.2 314.2Q948.0 327.0 949.5 331.3M910.9 375.9Q944.4 367.2 975.5 370.1M910.9 375.9Q913.0 386.7 922.1 389.4M922.1 389.4Q946.9 392.7 973.4 394.9M922.1 389.4Q922.2 429.5 926.5 456.7M922.1 389.4L975.5 370.1M926.5 456.7Q941.7 448.7 946.6 442.3M926.5 456.7Q927.5 466.4 925.6 473.2M926.5 456.7L973.4 394.9M925.6 473.2Q912.9 484.4 912.0 501.3M912.0 501.3Q941.6 505.8 958.1 519.0M912.0 501.3Q925.9 527.8 937.8 551.7M937.8 551.7Q957.4 562.6 969.2 565.2M937.8 551.7Q942.7 556.3 938.9 574.7M938.9 574.7Q941.6 577.7 955.8 587.4M938.9 574.7Q928.3 597.6 916.8 611.6M916.8 611.6Q938.2 610.0 972.4 617.2M958.7 56.9Q966.2 67.6 986.7 65.0M958.7 56.9Q960.0 79.9 954.2 105.0M954.2 105.0Q976.2 106.8 985.8 116.7M955.8 130.6Q989.3 137.0 1009.2 139.0M955.8 130.6Q952.4 163.1 947.2 197.1M947.2 197.1Q949.9 211.0 951.7 219.3M951.7 219.3Q966.0 209.6 990.8 205.7M951.7 219.3Q960.6 245.1 958.9 257.0M958.9 257.0Q975.9 254.1 996.7 258.5M958.9 257.0Q947.3 271.0 948.7 287.0M958.9 257.0L990.9 279.0M948.7 287.0Q964.7 278.8 990.9 279.0M948.7 287.0Q955.7 308.1 949.5 331.3M975.5 370.1Q987.7 362.8 989.4 360.2M975.5 370.1Q972.1 388.5 973.4 394.9M973.4 394.9Q981.9 396.4 995.0 391.2M973.4 394.9Q956.0 413.3 946.6 442.3M973.4 394.9L989.4 360.2M946.6 442.3Q976.2 438.5 996.5 435.0M946.6 442.3Q949.4 467.4 961.6 480.3M961.6 480.3Q987.3 478.3 1007.1 479.8M961.6 480.3Q957.8 503.3 958.1 519.0M958.1 519.0Q990.9 521.6 1011.7 519.9M969.2 565.2Q989.3 561.1 1007.3 554.4M969.2 565.2Q955.8 569.7 955.8 587.4M955.8 587.4Q975.7 598.6 997.1 599.1M955.8 587.4Q962.4 604.2 972.4 617.2M972.4 617.2Q994.0 629.4 1004.0 640.6M986.7 65.0Q988.8 87.5 985.8 116.7M1009.2 139.0Q1027.7 133.7 1032.2 133.2M1009.2 139.0Q991.5 151.2 987.2 168.6M987.2 168.6Q1003.0 163.3 1022.1 171.4M987.2 168.6Q987.0 181.7 990.8 205.7M990.8 205.7Q1008.4 209.8 1028.4 224.6M990.8 205.7Q995.2 231.9 996.7 258.5M996.7 258.5Q1006.3 245.1 1029.1 242.0M996.7 258.5Q989.4 264.2 990.9 279.0M990.9 279.0Q1017.5 287.8 1044.4 294.8M990.9 279.0Q1003.3 300.6 1005.4 315.5M990.9 279.0L1020.9 315.6M1005.4 315.5Q1006.6 318.7 1020.9 315.6M1005.4 315.5Q996.7 338.1 989.4 360.2M1005.4 315.5L1024.2 362.4M995.0 391.2Q991.9 408.1 996.5 435.0M995.0 391.2L1039.6 432.4M996.5 435.0Q1019.5 429.6 1039.6 432.4M996.5 435.0Q999.5 456.8 1007.1 479.8M1007.1 479.8Q1013.9 496.8 1011.7 519.9M1011.7 519.9Q1021.7 506.3 1030.6 499.4M1011.7 519.9Q1005.8 541.1 1007.3 554.4M1011.7 519.9L1038.7 562.5M1007.3 554.4Q1028.3 560.3 1038.7 562.5M1007.3 554.4Q1002.3 574.4 997.1 599.1M1007.3 554.4L1030.6 499.4M997.1 599.1Q1027.2 581.1 1043.3 576.0M997.1 599.1Q998.0 617.5 1004.0 640.6M1004.0 640.6Q1025.1 630.9 1037.0 615.5M1043.3 77.4Q1056.1 73.5 1079.7 69.3M1043.3 77.4Q1039.0 94.0 1028.6 118.0M1028.6 118.0Q1025.1 121.0 1032.2 133.2M1028.6 118.0L1079.7 69.3M1032.2 133.2Q1049.5 129.4 1060.8 139.1M1032.2 133.2Q1023.5 151.4 1022.1 171.4M1022.1 171.4Q1047.4 176.7 1086.3 180.8M1022.1 171.4Q1022.3 204.1 1028.4 224.6M1028.4 224.6Q1055.7 214.7 1070.9 217.1M1028.4 224.6Q1031.0 228.1 1029.1 242.0M1028.4 224.6L1081.6 270.0M1029.1 242.0Q1058.1 262.6 1081.6 270.0M1029.1 242.0Q1035.8 275.4 1044.4 294.8M1044.4 294.8Q1059.5 295.9 1074.0 308.0M1044.4 294.8Q1035.6 304.9 1020.9 315.6M1020.9 315.6Q1051.1 321.8 1076.1 317.3M1020.9 315.6Q1021.9 345.4 1024.2 362.4M1020.9 315.6L1074.0 308.0M1024.2 362.4Q1041.2 392.4 1047.5 418.4M1024.2 362.4L1076.1 317.3M1047.5 418.4Q1048.6 413.5 1058.7 419.3M1047.5 418.4Q1038.9 429.9 1039.6 432.4M1039.6 432.4Q1032.1 458.5 1033.7 473.6M1033.7 473.6Q1028.9 488.6 1030.6 499.4M1030.6 499.4Q1050.8 506.5 1069.6 505.9M1030.6 499.4Q1039.5 531.5 1038.7 562.5M1038.7 562.5Q1045.9 555.2 1065.9 542.4M1038.7 562.5Q1041.9 565.3 1043.3 576.0M1043.3 576.0Q1061.1 578.2 1075.0 584.4M1043.3 576.0Q1044.0 589.7 1037.0 615.5M1037.0 615.5Q1052.4 610.8 1081.0 617.7M1079.7 69.3Q1099.3 68.9 1105.3 62.9M1079.7 69.3Q1089.8 89.7 1087.0 117.4M1087.0 117.4Q1107.2 118.6 1125.4 118.9M1087.0 117.4Q1075.5 127.9 1060.8 139.1M1060.8 139.1Q1093.6 138.4 1121.2 148.8M1060.8 139.1Q1075.9 155.7 1086.3 180.8M1086.3 180.8Q1090.7 172.7 1106.8 170.6M1086.3 180.8Q1082.4 205.7 1070.9 217.1M1070.9 217.1Q1077.9 236.9 1081.6 270.0M1081.6 270.0Q1089.9 252.0 1095.2 245.4M1074.0 308.0Q1090.8 310.3 1097.2 300.0M1074.0 308.0Q1075.4 309.7 1076.1 317.3M1076.1 317.3Q1079.6 347.4 1083.1 364.4M1083.1 364.4Q1095.9 360.1 1119.5 361.4M1058.7 419.3Q1051.7 432.8 1058.1 443.5M1058.7 419.3L1119.5 361.4M1058.1 443.5Q1066.6 463.2 1072.4 490.2M1058.1 443.5L1115.9 415.6M1072.4 490.2Q1076.7 498.7 1069.6 505.9M1069.6 505.9Q1087.4 518.4 1110.4 517.8M1065.9 542.4Q1078.8 541.7 1099.9 548.5M1065.9 542.4Q1075.1 557.6 1075.0 584.4M1075.0 584.4Q1082.4 595.2 1081.0 617.7M1081.0 617.7Q1095.8 626.8 1104.0 622.3M1105.3 62.9Q1131.3 72.1 1146.2 77.5M1125.4 118.9Q1128.2 126.7 1143.8 123.4M1125.4 118.9Q1118.3 136.5 1121.2 148.8M1121.2 148.8Q1133.3 153.2 1157.1 158.6M1121.2 148.8Q1117.0 164.6 1106.8 170.6M1106.8 170.6Q1133.8 182.3 1153.2 187.4M1106.8 170.6Q1106.9 200.4 1120.6 218.7M1120.6 218.7Q1108.3 226.1 1095.2 245.4M1095.2 245.4Q1115.5 247.9 1142.6 259.0M1095.2 245.4Q1099.9 269.5 1097.2 300.0M1097.2 300.0Q1120.3 297.8 1152.7 293.7M1097.2 300.0Q1110.3 309.6 1122.8 320.4M1097.2 300.0L1142.6 259.0M1122.8 320.4Q1137.8 314.4 1140.1 316.5M1122.8 320.4Q1120.6 340.2 1119.5 361.4M1119.5 361.4Q1116.9 395.2 1115.9 415.6M1115.9 415.6Q1132.8 417.1 1149.6 412.3M1115.9 415.6Q1108.8 435.1 1113.9 450.6M1113.9 450.6Q1112.5 458.7 1106.0 462.3M1106.0 462.3Q1136.4 463.1 1160.7 470.8M1110.4 517.8Q1130.0 505.9 1153.9 501.3M1099.9 548.5Q1127.5 547.2 1155.1 557.4M1099.9 548.5Q1105.8 556.1 1104.2 573.9M1099.9 548.5L1161.6 601.7M1104.2 573.9Q1139.6 586.9 1161.6 601.7M1104.2 573.9Q1098.1 593.3 1104.0 622.3M1146.2 77.5Q1165.0 80.7 1191.6 74.6M1146.2 77.5Q1142.3 96.2 1143.8 123.4M1143.8 123.4Q1148.1 146.8 1157.1 158.6M1157.1 158.6Q1182.6 144.2 1196.7 136.7M1157.1 158.6L1174.7 108.5M1153.2 187.4Q1178.0 179.5 1199.2 183.4M1153.2 187.4Q1148.0 210.3 1148.2 228.6M1148.2 228.6Q1165.4 218.9 1180.6 203.1M1148.2 228.6Q1143.0 246.8 1142.6 259.0M1142.6 259.0Q1160.0 250.2 1180.5 245.7M1142.6 259.0L1188.9 305.8M1152.7 293.7Q1170.0 297.5 1188.9 305.8M1152.7 293.7Q1148.2 310.5 1140.1 316.5M1133.8 362.4Q1155.2 356.2 1180.4 354.5M1133.8 362.4Q1145.7 391.8 1149.6 412.3M1133.8 362.4L1190.0 405.7M1149.6 412.3Q1153.0 422.5 1153.9 434.8M1149.6 412.3L1180.4 354.5M1153.9 434.8Q1178.1 438.6 1190.9 437.0M1153.9 434.8Q1160.0 448.8 1160.7 470.8M1160.7 470.8Q1182.1 472.5 1196.4 468.8M1160.7 470.8Q1163.0 489.7 1153.9 501.3M1153.9 501.3Q1161.6 510.2 1177.8 507.6M1153.9 501.3Q1159.7 532.4 1155.1 557.4M1155.1 557.4Q1167.5 558.9 1187.9 564.7M1155.1 557.4Q1160.1 580.7 1161.6 601.7M1155.1 557.4L1177.8 507.6M1153.0 636.8Q1172.8 625.6 1192.5 617.2M1153.0 636.8L1173.4 593.2M1191.6 74.6Q1193.6 68.6 1207.0 73.1M1191.6 74.6Q1183.7 95.6 1174.7 108.5M1174.7 108.5Q1209.5 112.0 1231.6 120.1M1174.7 108.5Q1180.9 126.7 1196.7 136.7M1196.7 136.7Q1216.2 134.8 1228.3 142.3M1196.7 136.7L1218.6 182.9M1199.2 183.4Q1196.3 200.2 1180.6 203.1M1180.6 203.1Q1213.8 208.5 1234.0 212.7M1180.5 245.7Q1199.4 248.5 1214.0 259.4M1180.5 245.7Q1181.6 269.1 1188.9 305.8M1180.5 245.7L1235.9 283.0M1188.9 305.8Q1205.5 293.4 1235.9 283.0M1188.9 305.8Q1191.1 321.3 1197.1 333.6M1197.1 333.6Q1198.6 327.2 1206.0 317.7M1197.1 333.6Q1185.1 338.8 1180.4 354.5M1197.1 333.6L1235.9 283.0M1180.4 354.5Q1202.5 356.7 1223.0 370.3M1180.4 354.5Q1191.3 384.8 1190.0 405.7M1190.0 405.7Q1195.7 421.3 1190.9 437.0M1190.0 405.7L1223.0 370.3M1196.4 468.8Q1214.2 471.6 1227.1 485.3M1196.4 468.8Q1181.3 493.8 1177.8 507.6M1177.8 507.6Q1189.3 512.5 1207.0 514.5M1177.8 507.6Q1188.1 537.5 1187.9 564.7M1187.9 564.7Q1211.7 563.9 1231.7 566.6M1187.9 564.7Q1181.6 573.5 1173.4 593.2M1187.9 564.7L1215.2 600.2M1173.4 593.2Q1188.8 600.4 1215.2 600.2M1173.4 593.2Q1177.9 608.1 1192.5 617.2M1173.4 593.2L1231.7 566.6M1192.5 617.2Q1208.7 634.0 1225.6 639.7M1207.0 73.1Q1223.8 78.5 1249.3 77.3M1207.0 73.1Q1222.8 95.9 1231.6 120.1M1231.6 120.1Q1252.5 116.2 1268.9 107.3M1231.6 120.1Q1234.0 128.2 1228.3 142.3M1228.3 142.3Q1232.2 135.8 1245.2 135.2M1228.3 142.3Q1220.8 165.2 1218.6 182.9M1228.3 142.3L1247.0 169.0M1218.6 182.9Q1232.0 196.8 1234.0 212.7M1218.6 182.9L1246.9 222.7M1234.0 212.7Q1218.0 237.4 1214.0 259.4M1234.0 212.7L1245.4 264.3M1214.0 259.4Q1230.9 257.1 1245.4 264.3M1214.0 259.4Q1221.4 271.3 1235.9 283.0M1235.9 283.0Q1255.2 286.2 1265.6 303.1M1235.9 283.0Q1225.4 300.2 1206.0 317.7M1206.0 317.7Q1236.6 331.5 1267.7 336.8M1206.0 317.7Q1208.4 340.7 1223.0 370.3M1223.0 370.3Q1252.9 376.4 1271.6 381.6M1210.9 394.1Q1229.5 408.7 1262.0 418.9M1210.9 394.1Q1215.0 417.3 1224.0 445.7M1224.0 445.7Q1231.8 462.8 1227.1 485.3M1224.0 445.7L1244.1 468.6M1227.1 485.3Q1220.7 506.8 1207.0 514.5M1207.0 514.5Q1235.2 509.8 1254.0 513.7M1207.0 514.5Q1219.0 546.5 1231.7 566.6M1231.7 566.6Q1247.3 562.3 1263.8 559.8M1231.7 566.6Q1221.7 582.1 1215.2 600.2M1215.2 600.2Q1230.6 586.7 1244.7 585.9M1215.2 600.2Q1213.6 621.8 1225.6 639.7M1225.6 639.7Q1237.9 634.4 1259.4 622.0M1249.3 77.3Q1269.2 74.3 1282.8 74.1M1249.3 77.3Q1252.8 89.6 1268.9 107.3M1268.9 107.3Q1275.9 108.6 1291.0 113.9M1268.9 107.3Q1263.3 126.4 1245.2 135.2M1245.2 135.2Q1270.2 144.8 1294.9 159.8M1245.2 135.2Q1250.7 156.1 1247.0 169.0M1247.0 169.0Q1282.2 175.4 1309.2 168.3M1247.0 169.0Q1242.3 198.3 1246.9 222.7M1247.0 169.0L1294.9 159.8M1246.9 222.7Q1281.1 231.2 1303.3 226.1M1245.4 264.3Q1265.1 251.2 1288.5 243.7M1245.4 264.3Q1254.0 279.0 1265.6 303.1M1245.4 264.3L1294.3 288.3M1265.6 303.1Q1283.1 296.8 1294.3 288.3M1267.7 336.8Q1285.4 342.8 1302.6 343.4M1267.7 336.8Q1265.1 359.9 1271.6 381.6M1271.6 381.6Q1281.5 372.4 1291.2 360.3M1271.6 381.6Q1261.9 407.2 1262.0 418.9M1271.6 381.6L1302.6 343.4M1262.0 418.9Q1251.3 420.6 1245.3 428.3M1262.0 418.9L1304.2 443.4M1245.3 428.3Q1280.5 442.5 1304.2 443.4M1245.3 428.3Q1251.3 442.2 1244.1 468.6M1244.1 468.6Q1259.6 476.7 1288.5 472.8M1244.1 468.6Q1255.1 485.3 1254.0 513.7M1254.0 513.7Q1252.3 538.6 1263.8 559.8M1254.0 513.7L1280.6 549.5M1263.8 559.8Q1266.5 556.1 1280.6 549.5M1263.8 559.8Q1248.5 568.5 1244.7 585.9M1263.8 559.8L1306.1 515.6M1244.7 585.9Q1261.3 594.6 1286.6 594.3M1244.7 585.9Q1246.3 601.7 1259.4 622.0M1244.7 585.9L1280.6 549.5M1259.4 622.0Q1268.9 613.6 1281.3 618.7M1282.8 74.1Q1298.1 76.6 1319.1 70.3M1294.9 159.8Q1295.6 168.7 1309.2 168.3M1309.2 168.3Q1308.2 166.0 1318.9 177.4M1309.2 168.3L1328.4 158.9M1303.3 226.1Q1290.8 236.1 1288.5 243.7M1288.5 243.7Q1318.5 242.0 1340.5 251.6M1288.5 243.7Q1286.3 268.4 1294.3 288.3M1294.3 288.3Q1298.7 292.7 1316.5 285.0M1294.3 288.3Q1292.3 317.8 1302.6 343.4M1294.3 288.3L1340.5 251.6M1302.6 343.4Q1296.1 351.0 1291.2 360.3M1291.2 360.3Q1315.0 353.5 1332.5 352.7M1291.2 360.3Q1292.5 382.9 1295.0 410.3M1291.2 360.3L1323.0 419.2M1304.2 443.4Q1320.8 441.3 1330.2 440.1M1304.2 443.4Q1295.3 451.6 1288.5 472.8M1288.5 472.8Q1294.2 498.9 1306.1 515.6M1280.6 549.5Q1310.1 547.0 1332.3 537.7M1280.6 549.5Q1290.3 575.1 1286.6 594.3M1280.6 549.5L1346.6 521.0M1286.6 594.3Q1312.9 603.1 1328.6 597.9M1286.6 594.3Q1279.1 603.5 1281.3 618.7M1286.6 594.3L1332.3 537.7M1281.3 618.7Q1306.6 629.8 1329.9 629.0M1319.1 70.3Q1355.7 69.0 1381.9 75.6M1319.1 70.3Q1335.5 86.2 1347.5 109.3M1347.5 109.3Q1362.4 95.7 1373.3 93.2M1347.5 109.3Q1343.5 133.0 1328.4 158.9M1328.4 158.9Q1327.0 164.6 1318.9 177.4M1318.9 177.4L1379.4 232.3M1341.9 203.2Q1357.3 215.6 1379.4 232.3M1316.5 285.0Q1347.5 291.1 1377.2 305.5M1316.5 285.0Q1321.5 310.6 1330.7 326.3M1330.7 326.3Q1341.8 333.5 1357.7 339.0M1330.7 326.3Q1338.5 342.1 1332.5 352.7M1332.5 352.7Q1356.0 363.0 1366.5 382.1M1323.0 419.2Q1350.4 404.5 1384.8 394.9M1323.0 419.2Q1328.4 424.3 1330.2 440.1M1330.2 440.1Q1349.5 432.3 1366.5 433.7M1330.2 440.1Q1328.2 462.4 1318.7 470.9M1330.2 440.1L1368.0 471.2M1346.6 521.0L1358.4 550.6M1332.3 537.7Q1324.9 571.6 1328.6 597.9M1381.9 75.6Q1390.8 61.9 1396.3 55.6M1373.3 93.2Q1360.5 124.6 1353.8 153.6M1353.8 153.6Q1379.9 141.7 1409.2 133.4M1353.8 153.6Q1366.8 177.6 1366.2 194.0M1365.1 272.0Q1378.0 262.9 1395.9 253.7M1365.1 272.0Q1367.0 282.6 1377.2 305.5M1357.7 339.0Q1372.9 335.0 1401.9 338.8M1366.5 382.1Q1382.7 378.0 1394.9 367.6M1366.5 382.1L1401.9 338.8M1384.8 394.9Q1406.2 402.0 1421.2 410.5M1366.5 433.7Q1372.9 454.8 1368.0 471.2M1368.0 471.2Q1387.1 473.9 1410.6 474.0M1374.3 502.9Q1390.2 508.3 1401.8 514.3M1374.3 502.9Q1364.4 524.9 1358.4 550.6M1358.4 550.6Q1378.6 558.9 1408.6 566.9M1358.4 550.6Q1355.6 565.3 1355.4 585.2M1355.4 585.2Q1383.1 586.3 1397.7 591.2M1355.4 585.2Q1371.1 611.7 1381.7 638.3M1381.7 638.3Q1390.1 632.5 1398.4 627.5M1396.3 55.6Q1403.3 85.6 1416.5 122.7M1416.5 122.7Q1435.7 120.3 1442.4 114.6M1416.5 122.7Q1407.2 129.9 1409.2 133.4M1409.2 133.4Q1419.7 147.7 1427.3 153.7M1397.6 195.4Q1415.6 192.5 1440.4 182.1M1420.0 204.0Q1439.9 209.7 1446.5 228.4M1398.5 301.1Q1405.4 313.3 1401.9 338.8M1401.9 338.8Q1413.1 324.3 1438.1 314.7M1421.2 410.5Q1430.8 410.9 1448.0 417.6M1392.9 428.6Q1417.6 431.2 1438.9 442.0M1410.6 474.0Q1436.2 478.0 1449.8 492.0M1410.6 474.0Q1403.2 492.6 1401.8 514.3M1397.7 591.2Q1395.1 611.7 1398.4 627.5M1397.7 591.2L1436.7 541.3M1398.4 627.5L1456.8 575.5M1450.4 59.3Q1452.4 85.4 1442.4 114.6M1442.4 114.6Q1464.3 110.3 1493.6 101.6M1442.4 114.6Q1428.2 131.2 1427.3 153.7M1427.3 153.7Q1454.6 156.0 1481.7 155.5M1427.3 153.7Q1438.3 174.5 1440.4 182.1M1440.4 182.1Q1450.9 182.2 1468.4 177.2M1428.8 256.0Q1444.4 259.2 1470.6 254.5M1428.8 256.0Q1435.4 268.1 1428.2 289.3M1438.1 314.7Q1455.1 311.2 1474.9 318.6M1436.5 365.4Q1444.0 386.0 1448.0 417.6M1448.0 417.6Q1465.6 411.5 1472.8 413.1M1448.0 417.6Q1441.7 426.9 1438.9 442.0M1438.9 442.0Q1467.3 431.7 1487.7 433.4M1449.8 492.0Q1465.6 481.8 1490.5 482.0M1457.4 530.6Q1468.7 527.6 1476.4 519.1M1436.7 541.3Q1449.7 546.3 1471.9 544.4M1436.7 541.3Q1451.6 558.3 1456.8 575.5M1456.8 575.5Q1472.3 579.3 1492.0 587.0M1456.8 575.5Q1451.0 601.7 1441.4 633.6M1441.4 633.6Q1462.8 626.9 1492.7 615.7M1480.9 67.4Q1500.0 68.1 1505.4 56.7M1480.9 67.4Q1490.1 91.1 1493.6 101.6M1493.6 101.6Q1515.2 106.9 1524.7 110.0M1493.6 101.6L1505.4 56.7M1481.7 155.5Q1485.4 139.8 1501.3 130.4M1468.4 177.2Q1473.9 197.0 1479.8 221.1M1479.8 221.1Q1505.9 218.8 1528.9 204.3M1479.8 221.1Q1470.0 231.5 1470.6 254.5M1470.6 254.5Q1497.8 248.2 1519.8 243.8M1465.9 279.8Q1490.9 285.0 1524.1 296.6M1465.9 279.8L1519.8 243.8M1474.9 318.6Q1497.1 326.0 1520.6 321.1M1495.0 359.4Q1517.4 350.9 1531.4 354.6M1472.8 413.1Q1482.5 409.5 1503.0 409.9M1472.8 413.1Q1473.7 422.8 1487.7 433.4M1487.7 433.4Q1490.5 429.7 1504.0 427.1M1487.7 433.4Q1488.6 463.0 1490.5 482.0M1490.5 482.0Q1502.3 476.4 1515.7 482.8M1476.4 519.1Q1479.2 529.1 1471.9 544.4M1471.9 544.4Q1481.1 546.6 1503.2 556.6M1471.9 544.4Q1486.6 572.3 1492.0 587.0M1471.9 544.4L1528.0 576.9M1492.0 587.0Q1516.8 581.6 1528.0 576.9M1492.0 587.0Q1489.7 601.5 1492.7 615.7M1524.7 110.0Q1540.9 106.1 1562.3 108.5M1501.3 130.4Q1507.6 150.2 1527.4 181.8M1527.4 181.8Q1529.8 190.4 1528.9 204.3M1528.9 204.3L1544.6 242.8M1524.1 296.6Q1528.2 303.1 1520.6 321.1M1531.4 354.6Q1538.7 352.6 1558.8 356.6M1504.0 427.1Q1526.4 431.4 1560.0 439.3M1515.7 482.8Q1521.9 498.8 1529.5 522.1M1503.2 556.6Q1510.9 559.9 1528.0 576.9M1528.0 576.9Q1542.2 583.5 1566.8 590.8M1528.0 576.9Q1522.6 597.5 1525.1 618.3M1547.6 55.0Q1578.0 70.5 1600.1 81.7M1562.3 108.5Q1559.7 126.8 1566.9 143.9M1562.3 108.5L1600.1 81.7M1544.6 242.8Q1578.5 250.1 1605.6 243.7M1544.6 242.8L1595.1 223.5M1551.6 333.9Q1561.1 339.6 1558.8 356.6M1542.4 403.7Q1553.1 416.1 1576.6 419.1M1542.4 403.7Q1552.8 421.3 1560.0 439.3M1560.0 439.3Q1577.9 441.6 1587.3 445.4M1560.0 439.3Q1558.7 458.9 1556.3 491.2M1556.3 491.2Q1574.0 474.4 1598.2 470.3M1553.8 553.2Q1559.9 569.9 1566.8 590.8M1559.2 623.4Q1586.7 615.9 1602.8 612.0M1600.1 81.7Q1596.8 83.5 1584.4 95.5M1584.4 95.5Q1608.0 109.0 1642.2 117.3M1584.4 95.5L1621.6 60.8M1605.6 243.7Q1597.3 269.9 1599.6 287.8M1605.6 243.7L1619.2 203.9M1599.6 287.8Q1607.7 291.6 1615.5 293.4M1578.3 334.2Q1608.1 338.9 1641.9 344.3M1602.0 369.6L1641.9 344.3M1576.6 419.1Q1602.4 404.4 1636.6 391.7M1576.6 419.1Q1587.4 426.5 1587.3 445.4M1587.3 445.4Q1601.9 433.2 1629.2 427.7M1587.3 445.4Q1592.7 459.1 1598.2 470.3M1598.2 470.3Q1620.2 473.2 1643.6 479.4M1598.2 470.3Q1594.0 494.8 1588.1 509.5M1588.1 509.5Q1605.7 515.6 1626.0 507.7M1578.1 538.1Q1603.1 553.9 1629.6 567.1M1642.2 117.3Q1666.4 116.2 1678.4 102.4M1640.7 145.2L1678.4 102.4M1615.3 179.3Q1627.5 180.3 1653.5 167.7M1619.2 203.9Q1646.7 213.0 1679.0 217.9M1619.2 203.9Q1628.0 225.2 1630.1 249.3M1630.1 249.3Q1653.3 263.9 1663.2 269.4M1630.1 249.3Q1623.5 272.8 1615.5 293.4M1629.2 427.7Q1639.5 428.4 1653.3 431.5M1629.2 427.7Q1632.1 456.1 1643.6 479.4M1629.2 427.7L1673.3 407.4M1643.6 479.4Q1653.8 486.9 1671.2 485.3M1628.5 639.4Q1646.5 636.1 1668.8 637.4M1678.4 102.4Q1686.2 110.3 1689.4 110.6M1678.4 102.4L1691.2 77.4M1674.9 145.9L1689.4 110.6M1679.0 217.9Q1680.5 225.0 1689.9 227.5M1679.0 217.9Q1670.3 237.3 1663.2 269.4M1663.2 269.4Q1675.0 261.9 1696.8 258.9M1663.2 269.4Q1665.1 282.4 1667.4 293.0M1663.2 269.4L1706.5 292.6M1667.4 293.0Q1691.9 288.5 1706.5 292.6M1658.1 337.8Q1654.1 353.2 1657.2 366.1M1658.1 337.8L1695.0 361.7M1657.2 366.1Q1671.7 382.4 1673.3 407.4M1653.3 431.5Q1676.9 435.3 1699.4 438.3M1671.2 485.3Q1701.2 482.6 1717.2 466.1M1653.3 541.4Q1654.2 558.7 1651.9 587.3M1653.3 541.4L1707.0 523.2M1651.9 587.3Q1687.5 580.3 1716.2 583.0M1651.9 587.3Q1660.2 618.5 1668.8 637.4M1651.9 587.3L1709.3 536.0M1668.8 637.4Q1686.5 638.4 1713.3 631.2M1689.4 110.6Q1721.5 107.8 1744.6 102.9M1689.4 110.6Q1685.1 125.3 1694.1 140.4M1694.1 140.4Q1720.0 146.2 1746.4 145.2M1694.1 140.4Q1693.4 163.1 1687.7 189.1M1694.1 140.4L1745.8 185.7M1689.9 227.5Q1714.7 222.9 1748.5 208.1M1689.9 227.5Q1694.8 238.6 1696.8 258.9M1689.9 227.5L1738.8 240.0M1696.8 258.9Q1700.6 271.0 1706.5 292.6M1706.5 292.6Q1720.4 295.9 1748.3 301.7M1706.5 292.6L1749.8 315.4M1695.0 361.7L1749.8 315.4M1707.0 523.2Q1725.8 512.3 1743.8 511.3M1709.3 536.0Q1721.0 532.7 1743.6 543.3M1716.2 583.0Q1718.0 578.6 1731.8 573.3M1736.5 81.8Q1742.9 96.5 1744.6 102.9M1744.6 102.9Q1740.5 123.0 1746.4 145.2M1744.6 102.9L1783.8 71.1M1746.4 145.2Q1770.0 144.5 1783.5 140.9M1745.8 185.7Q1764.4 194.5 1779.1 190.2M1748.5 208.1Q1766.0 219.0 1774.2 225.0M1748.5 208.1L1779.1 190.2M1748.3 301.7L1761.8 314.5M1749.8 315.4L1786.9 281.7M1740.1 366.3Q1739.0 384.8 1726.8 394.5M1726.8 394.5Q1749.8 393.6 1774.7 402.0M1754.2 452.3Q1764.7 441.9 1785.7 440.3M1754.2 452.3Q1737.0 468.0 1730.6 488.5M1730.6 488.5Q1753.7 469.5 1776.7 462.8M1730.6 488.5Q1739.5 493.2 1743.8 511.3M1743.6 543.3Q1755.7 555.3 1780.0 562.7M1744.0 628.6Q1762.2 636.0 1787.2 629.8M1783.8 71.1Q1774.4 84.7 1773.9 101.8M1779.1 190.2Q1788.7 184.2 1800.2 177.8M1762.0 248.3Q1779.5 266.2 1786.9 281.7M1784.5 354.4Q1774.5 374.6 1774.7 402.0M1774.7 402.0Q1792.5 394.4 1819.1 394.9M1785.7 440.3Q1800.7 437.9 1809.9 439.4M1776.7 462.8Q1788.5 468.4 1810.1 462.8M1780.0 562.7Q1784.4 574.5 1779.7 595.9M1779.7 595.9Q1796.1 591.4 1818.9 597.4M1787.2 629.8Q1810.4 631.2 1824.9 639.3M1797.6 83.3Q1831.3 82.2 1859.4 68.3M1799.1 139.9Q1837.7 148.5 1862.2 151.8M1799.1 139.9Q1805.2 164.4 1800.2 177.8M1800.2 177.8Q1830.5 177.8 1848.2 172.1M1799.9 210.0L1855.8 264.6M1797.1 253.7Q1800.9 275.9 1806.6 300.3M1806.6 300.3Q1824.0 299.3 1840.1 294.1M1806.6 300.3Q1809.2 303.5 1809.4 319.3M1809.4 319.3L1837.0 370.4M1819.1 394.9Q1836.6 395.2 1845.6 392.6M1819.1 394.9Q1809.1 420.2 1809.9 439.4M1809.9 439.4L1838.8 475.6M1811.6 523.6Q1824.1 512.7 1837.4 499.2M1859.4 68.3Q1856.0 96.5 1855.1 113.1M1855.1 113.1Q1861.6 108.7 1872.9 111.3M1855.1 113.1Q1853.9 129.5 1862.2 151.8M1844.5 211.0L1896.7 180.4M1855.8 264.6Q1873.7 260.2 1888.2 245.5M1840.1 294.1Q1869.0 298.3 1884.6 291.1M1840.1 294.1Q1854.9 305.7 1860.9 325.7M1860.9 325.7Q1884.0 318.3 1897.3 321.3M1860.9 325.7Q1849.9 351.2 1837.0 370.4M1837.0 370.4Q1859.0 373.8 1880.4 377.1M1845.6 392.6Q1865.7 396.8 1873.3 405.2M1845.6 392.6Q1841.9 415.1 1843.2 425.2M1843.2 425.2Q1863.3 438.8 1878.0 446.3M1843.2 425.2Q1839.1 454.8 1838.8 475.6M1838.8 475.6Q1838.2 490.5 1837.4 499.2M1837.4 499.2Q1870.5 508.6 1894.4 512.0M1837.4 499.2Q1844.1 539.3 1851.6 566.6M1851.6 566.6Q1873.2 563.2 1881.3 563.4M1860.7 583.4Q1880.4 587.5 1895.9 582.9M1895.2 144.3Q1900.6 167.5 1896.7 180.4M1900.4 222.5Q1897.9 227.4 1888.2 245.5M1888.2 245.5Q1891.4 269.3 1884.6 291.1M1878.0 446.3Q1882.0 458.5 1890.0 465.0" stroke="#f5c2aa" stroke-width="1.35" opacity="0.95"/><circle cx="687.5" cy="405" r="22" stroke="#e8899e" stroke-width="1.6"/></g><polygon points="370,71 437.5,71 432.5,80 420,90 410,97.5 395,100 370,97.5" fill="#aad3df"/><polygon points="1116,116 1130,107.5 1145,97.5 1165,85 1185,75 1202.5,71 1290,71 1265,77.5 1227.5,82.5 1202.5,90 1180,102.5 1170,120 1164.8,137.8 1154.4,146.8 1138.9,155.9 1125.9,165 1113,161 1107.8,168.9 1100,175 1100,120" fill="#aad3df"/><polygon points="1164.8,136 1163.5,155.9 1162.2,171.5 1172.6,179.2 1188.1,180.5 1184.2,187 1182.9,202.6 1185.5,218.1 1177.7,223.3 1167.4,233.7 1164.8,244 1157,246.6 1142.8,254.4 1133.7,251.8 1133.7,215.5 1142.8,212.9 1151.8,202.6 1142.8,197.4 1140.2,181.8 1136.3,165 1138.9,155.9 1154.4,146.8" fill="#aad3df"/><polygon points="1105,152 1108,138 1112,122 1118,118 1123,122 1122,140 1113,153" fill="#f1f0e4"/><polygon points="1140,97 1155,88 1175,77 1180,76 1178,80 1160,90 1143,100" fill="#f1f0e4"/><polygon points="1190,73 1230,71.5 1232,72.5 1195,75" fill="#f1f0e4"/><polyline points="1042.5,350 1077.5,350 1125,347.5" fill="none" stroke="#aad3df" stroke-width="2" stroke-linecap="round" stroke-linejoin="round"/><polyline points="1005,379 1017.5,375 1045,367.5 1070,370 1095,377.5" fill="none" stroke="#aad3df" stroke-width="8" stroke-linecap="round" stroke-linejoin="round"/><polyline points="985,399 995,395 1030,390 1055,392.5 1077.5,402.5" fill="none" stroke="#aad3df" stroke-width="9" stroke-linecap="round" stroke-linejoin="round"/><polyline points="980,426 990,422.5 1027.5,420 1060,417.5 1080,427.5" fill="none" stroke="#aad3df" stroke-width="10" stroke-linecap="round" stroke-linejoin="round"/><g fill="none" stroke="#a89bb5" stroke-width="1.2"><polyline points="1628,177 1648,168 1676,171 1693,163 1696,149 1710,154 1724,166 1752,177 1757,188 1752,211 1755,253 1760,272 1757,295 1769,323 1774,340 1790,400 1800,440 1830,470 1864,480"/><polyline points="1628,177 1642,216 1648,239 1653,287 1645,309 1611,315 1597,340 1560,350 1540,380 1520,420 1540,470 1580,500 1600,540 1640,560 1680,540 1720,550 1760,520 1800,530"/><polyline points="1549,70 1555,81 1597,84 1625,92.5 1648,95 1667,126 1693,143 1696,149"/><polyline points="1738,104 1780,109 1808,121 1836,115 1864,101"/><polyline points="1330,267 1358,244 1386,253 1417,250 1423,267 1442,239 1485,239 1487,267 1476,295 1493,315 1499,340 1480,390 1460,420 1420,480 1440,520 1450,605"/><polyline points="1300,150 1340,180 1330,267"/><polyline points="1288,71 1295,110 1300,150 1285,200 1280,240 1272,290 1245,320 1250,360 1230,400 1225,440 1215,480 1225,520 1235,560 1240,605"/><polyline points="922.2,471.4 923.9,497 925.6,515.9 946.2,539.9 959.9,526.2 973.6,526.2 987.3,539.9 1002.7,527.9 1028.4,536.4 1062.6,531.3 1096.8,529.6 1130,540 1160,560 1200,575 1240,605"/><polyline points="990,437.5 1005,450 1040,437.5 1075,427.5 1107.5,412.5 1130,427.5 1140,437.5 1165,445 1195,442.5 1215,445"/><polyline points="465,145 445,160 427.5,182.5 442.5,200 430,230 420,245 442.5,277.5 430,307.5 440,340 445,355"/></g></g></svg>
<div class="t" style="left:474.5px;top:73.14px;font-size:14px;color:#4a4a4a;transform:scaleX(0.8543);text-shadow:0 0 2px #fff,0 0 2px #fff;">Manchester</div>
<div class="t" style="left:549.5px;top:69.88px;font-size:13px;color:#4a4a4a;transform:scaleX(0.9234);text-shadow:0 0 2px #fff,0 0 2px #fff;">Sheffield</div>
<div class="t" style="left:416.75px;top:86.89px;font-size:14px;color:#4a4a4a;transform:scaleX(0.8710);text-shadow:0 0 2px #fff,0 0 2px #fff;">Liverpool</div>
<div class="t" style="left:432.5px;top:123.37px;font-size:12px;color:#4a4a4a;transform:scaleX(0.8208);text-shadow:0 0 2px #fff,0 0 2px #fff;">Chester</div>
<div class="t" style="left:420px;top:147.37px;font-size:12px;color:#4a4a4a;transform:scaleX(0.8313);text-shadow:0 0 2px #fff,0 0 2px #fff;">Wrexham</div>
<div class="t" style="left:490.5px;top:153.37px;font-size:12px;color:#4a4a4a;transform:scaleX(0.7832);text-shadow:0 0 2px #fff,0 0 2px #fff;">Stoke-on-</div>
<div class="t" style="left:500px;top:166.62px;font-size:12px;color:#4a4a4a;transform:scaleX(0.8163);text-shadow:0 0 2px #fff,0 0 2px #fff;">Trent</div>
<div class="t" style="left:573.75px;top:146.62px;font-size:12px;color:#4a4a4a;transform:scaleX(0.8758);text-shadow:0 0 2px #fff,0 0 2px #fff;">Nottingham</div>
<div class="t" style="left:559.25px;top:170.37px;font-size:12px;color:#4a4a4a;transform:scaleX(0.8199);text-shadow:0 0 2px #fff,0 0 2px #fff;">Derby</div>
<div class="t" style="left:523.75px;top:192.87px;font-size:12px;color:#4a4a4a;transform:scaleX(0.8233);text-shadow:0 0 2px #fff,0 0 2px #fff;">Lichfield</div>
<div class="t" style="left:582px;top:201.12px;font-size:12px;color:#4a4a4a;transform:scaleX(0.8059);text-shadow:0 0 2px #fff,0 0 2px #fff;">Leicester</div>
<div class="t" style="left:502.5px;top:225.64px;font-size:14px;color:#4a4a4a;transform:scaleX(0.8868);text-shadow:0 0 2px #fff,0 0 2px #fff;">Birmingham</div>
<div class="t" style="left:549.5px;top:258.37px;font-size:12px;color:#4a4a4a;transform:scaleX(0.8328);text-shadow:0 0 2px #fff,0 0 2px #fff;">Coventry</div>
<div class="t" style="left:620.75px;top:289.12px;font-size:12px;color:#4a4a4a;transform:scaleX(0.8590);text-shadow:0 0 2px #fff,0 0 2px #fff;">Milton</div>
<div class="t" style="left:618.25px;top:302.87px;font-size:12px;color:#4a4a4a;transform:scaleX(0.7931);text-shadow:0 0 2px #fff,0 0 2px #fff;">Keynes</div>
<div class="t" style="left:485.5px;top:294.62px;font-size:12px;color:#4a4a4a;transform:scaleX(0.8170);text-shadow:0 0 2px #fff,0 0 2px #fff;">Worcester</div>
<div class="t" style="left:422px;top:309.12px;font-size:12px;color:#4a4a4a;transform:scaleX(0.8514);text-shadow:0 0 2px #fff,0 0 2px #fff;">Hereford</div>
<div class="t" style="left:637.5px;top:98.12px;font-size:12px;color:#4a4a4a;transform:scaleX(0.8283);text-shadow:0 0 2px #fff,0 0 2px #fff;">Lincoln</div>
<div class="t" style="left:650px;top:229.87px;font-size:12px;color:#4a4a4a;transform:scaleX(0.8180);text-shadow:0 0 2px #fff,0 0 2px #fff;">Peterborough</div>
<div class="t" style="left:725.75px;top:251.12px;font-size:12px;color:#4a4a4a;transform:scaleX(0.7798);text-shadow:0 0 2px #fff,0 0 2px #fff;">Ely</div>
<div class="t" style="left:793.25px;top:219.62px;font-size:12px;color:#4a4a4a;transform:scaleX(0.8363);text-shadow:0 0 2px #fff,0 0 2px #fff;">Norwich</div>
<div class="t" style="left:685px;top:275.37px;font-size:12px;color:#4a4a4a;transform:scaleX(0.8390);text-shadow:0 0 2px #fff,0 0 2px #fff;">Cambridge</div>
<div class="t" style="left:753.75px;top:327.87px;font-size:12px;color:#4a4a4a;transform:scaleX(0.8063);text-shadow:0 0 2px #fff,0 0 2px #fff;">Colchester</div>
<div class="t" style="left:650px;top:351.12px;font-size:12px;color:#4a4a4a;transform:scaleX(0.8086);text-shadow:0 0 2px #fff,0 0 2px #fff;">St Albans</div>
<div class="t" style="left:668px;top:387.44px;font-size:14px;color:#4a4a4a;transform:scaleX(0.8776);text-shadow:0 0 2px #fff,0 0 2px #fff;">London</div>
<div class="t" style="left:738px;top:373.12px;font-size:12px;color:#4a4a4a;transform:scaleX(0.8214);text-shadow:0 0 2px #fff,0 0 2px #fff;">Southend-</div>
<div class="t" style="left:746px;top:387.12px;font-size:12px;color:#4a4a4a;transform:scaleX(0.7881);text-shadow:0 0 2px #fff,0 0 2px #fff;">on-Sea</div>
<div class="t" style="left:768px;top:449.12px;font-size:12px;color:#4a4a4a;transform:scaleX(0.8421);text-shadow:0 0 2px #fff,0 0 2px #fff;">Canterbury</div>
<div class="t" style="left:668px;top:506.92px;font-size:12px;color:#4a4a4a;transform:scaleX(0.8836);text-shadow:0 0 2px #fff,0 0 2px #fff;">Brighton</div>
<div class="t" style="left:481.5px;top:332.42px;font-size:12px;color:#4a4a4a;transform:scaleX(0.8254);text-shadow:0 0 2px #fff,0 0 2px #fff;">Gloucester</div>
<div class="t" style="left:575.5px;top:351.32px;font-size:12px;color:#4a4a4a;transform:scaleX(0.8580);text-shadow:0 0 2px #fff,0 0 2px #fff;">Oxford</div>
<div class="t" style="left:407.6px;top:393.64px;font-size:14px;color:#4a4a4a;transform:scaleX(0.8637);text-shadow:0 0 2px #fff,0 0 2px #fff;">Cardiff</div>
<div class="t" style="left:458px;top:419.54px;font-size:14px;color:#4a4a4a;transform:scaleX(0.8816);text-shadow:0 0 2px #fff,0 0 2px #fff;">Bristol</div>
<div class="t" style="left:459.4px;top:458.92px;font-size:12px;color:#4a4a4a;transform:scaleX(0.8034);text-shadow:0 0 2px #fff,0 0 2px #fff;">Wells</div>
<div class="t" style="left:524.7px;top:465.42px;font-size:12px;color:#4a4a4a;transform:scaleX(0.8043);text-shadow:0 0 2px #fff,0 0 2px #fff;">Salisbury</div>
<div class="t" style="left:589.8px;top:475.12px;font-size:12px;color:#4a4a4a;transform:scaleX(0.8296);text-shadow:0 0 2px #fff,0 0 2px #fff;">Winchester</div>
<div class="t" style="left:548.3px;top:493.12px;font-size:12px;color:#4a4a4a;transform:scaleX(0.8432);text-shadow:0 0 2px #fff,0 0 2px #fff;">Southampton</div>
<div class="t" style="left:580.5px;top:526.32px;font-size:12px;color:#4a4a4a;transform:scaleX(0.8556);text-shadow:0 0 2px #fff,0 0 2px #fff;">Portsmouth</div>
<div class="t" style="left:381px;top:539.12px;font-size:12px;color:#4a4a4a;transform:scaleX(0.8072);text-shadow:0 0 2px #fff,0 0 2px #fff;">Exeter</div>
<div class="t" style="left:904px;top:449.12px;font-size:12px;color:#4a4a4a;transform:scaleX(0.8454);text-shadow:0 0 2px #fff,0 0 2px #fff;">Oostende</div>
<div class="t" style="left:962px;top:460.12px;font-size:12px;color:#4a4a4a;transform:scaleX(0.8526);text-shadow:0 0 2px #fff,0 0 2px #fff;">Brugge</div>
<div class="t" style="left:880px;top:471.12px;font-size:12px;color:#4a4a4a;transform:scaleX(0.8430);text-shadow:0 0 2px #fff,0 0 2px #fff;">Dunkerque</div>
<div class="t" style="left:846.5px;top:485.42px;font-size:12px;color:#4a4a4a;transform:scaleX(0.7944);text-shadow:0 0 2px #fff,0 0 2px #fff;">Calais</div>
<div class="t" style="left:965.5px;top:505.62px;font-size:12px;color:#4a4a4a;transform:scaleX(0.8703);text-shadow:0 0 2px #fff,0 0 2px #fff;">Kortrijk</div>
<div class="t" style="left:953px;top:534.44px;font-size:14px;color:#4a4a4a;transform:scaleX(0.8673);text-shadow:0 0 2px #fff,0 0 2px #fff;">Lille</div>
<div class="t" style="left:975px;top:559.52px;font-size:12px;color:#4a4a4a;transform:scaleX(0.6352);text-shadow:0 0 2px #fff,0 0 2px #fff;">Tournai</div>
<div class="t" style="left:1028px;top:567.12px;font-size:12px;color:#4a4a4a;transform:scaleX(0.7497);text-shadow:0 0 2px #fff,0 0 2px #fff;">Mons</div>
<div class="t" style="left:1050.4px;top:459.54px;font-size:14px;color:#4a4a4a;transform:scaleX(0.8605);text-shadow:0 0 2px #fff,0 0 2px #fff;">Antwerpen</div>
<div class="t" style="left:1050px;top:479.74px;font-size:14px;color:#4a4a4a;transform:scaleX(0.8013);text-shadow:0 0 2px #fff,0 0 2px #fff;">Bruxelles -</div>
<div class="t" style="left:1055.8px;top:497.74px;font-size:14px;color:#4a4a4a;transform:scaleX(0.8353);text-shadow:0 0 2px #fff,0 0 2px #fff;">Brussel</div>
<div class="t" style="left:1062.5px;top:554.64px;font-size:14px;color:#7a5a86;font-style:italic;text-shadow:0 0 2px #fff,0 0 2px #fff;">België / Belgique /</div>
<div class="t" style="left:1096px;top:573.44px;font-size:14px;color:#7a5a86;font-style:italic;transform:scaleX(0.9807);text-shadow:0 0 2px #fff,0 0 2px #fff;">Belgien</div>
<div class="t" style="left:1192.8px;top:329.12px;font-size:12px;color:#4a4a4a;transform:scaleX(0.8303);text-shadow:0 0 2px #fff,0 0 2px #fff;">Arnhem</div>
<div class="t" style="left:1184.7px;top:355.82px;font-size:12px;color:#4a4a4a;transform:scaleX(0.8343);text-shadow:0 0 2px #fff,0 0 2px #fff;">Nijmegen</div>
<div class="t" style="left:1152.5px;top:380.52px;font-size:12px;color:#4a4a4a;transform:scaleX(0.8415);text-shadow:0 0 2px #fff,0 0 2px #fff;">genbosch</div>
<div class="t" style="left:1192px;top:406.12px;font-size:12px;color:#4a4a4a;transform:scaleX(0.8432);text-shadow:0 0 2px #fff,0 0 2px #fff;">Helmond</div>
<div class="t" style="left:1203.5px;top:424.12px;font-size:12px;color:#4a4a4a;transform:scaleX(0.8058);text-shadow:0 0 2px #fff,0 0 2px #fff;">Venlo</div>
<div class="t" style="left:1008.8px;top:404.12px;font-size:12px;color:#7a5a86;font-style:italic;transform:scaleX(0.8046);text-shadow:0 0 2px #fff,0 0 2px #fff;">Zeeland</div>
<div class="t" style="left:1187px;top:441.52px;font-size:12px;color:#7a5a86;font-style:italic;transform:scaleX(0.8995);text-shadow:0 0 2px #fff,0 0 2px #fff;">Limburg</div>
<div class="t" style="left:1100px;top:398.82px;font-size:12px;color:#7a5a86;font-style:italic;transform:scaleX(0.8765);text-shadow:0 0 2px #fff,0 0 2px #fff;">Noord-Brabant</div>
<div class="t" style="left:1057px;top:326.12px;font-size:12px;color:#7a5a86;font-style:italic;text-shadow:0 0 2px #fff,0 0 2px #fff;">Zuid-Holland</div>
<div class="t" style="left:1166px;top:121.62px;font-size:12px;color:#7a5a86;font-style:italic;transform:scaleX(0.8388);text-shadow:0 0 2px #fff,0 0 2px #fff;">Fryslân</div>
<div class="t" style="left:1256px;top:111.62px;font-size:12px;color:#7a5a86;font-style:italic;transform:scaleX(0.8564);text-shadow:0 0 2px #fff,0 0 2px #fff;">Groningen</div>
<div class="t" style="left:1252.5px;top:139.12px;font-size:12px;color:#4a4a4a;transform:scaleX(0.7944);text-shadow:0 0 2px #fff,0 0 2px #fff;">Assen</div>
<div class="t" style="left:1259px;top:162.87px;font-size:12px;color:#7a5a86;font-style:italic;transform:scaleX(0.8430);text-shadow:0 0 2px #fff,0 0 2px #fff;">Drenthe</div>
<div class="t" style="left:1277.5px;top:192.12px;font-size:12px;color:#4a4a4a;transform:scaleX(0.8103);text-shadow:0 0 2px #fff,0 0 2px #fff;">Emmen</div>
<div class="t" style="left:1097px;top:199.87px;font-size:12px;color:#7a5a86;font-style:italic;transform:scaleX(0.8724);text-shadow:0 0 2px #fff,0 0 2px #fff;">Noord-Holland</div>
<div class="t" style="left:1153.75px;top:222.12px;font-size:12px;color:#4a4a4a;transform:scaleX(0.8109);text-shadow:0 0 2px #fff,0 0 2px #fff;">Lelystad</div>
<div class="t" style="left:1228.75px;top:236.62px;font-size:12px;color:#7a5a86;font-style:italic;transform:scaleX(0.8304);text-shadow:0 0 2px #fff,0 0 2px #fff;">Overijssel</div>
<div class="t" style="left:1273.75px;top:271.62px;font-size:12px;color:#4a4a4a;transform:scaleX(0.7916);text-shadow:0 0 2px #fff,0 0 2px #fff;">Enschede</div>
<div class="t" style="left:1146px;top:275.15px;font-size:15px;color:#7a5a86;font-style:italic;transform:scaleX(0.9246);text-shadow:0 0 2px #fff,0 0 2px #fff;">Nederland</div>
<div class="t" style="left:1205px;top:297.12px;font-size:12px;color:#7a5a86;font-style:italic;transform:scaleX(0.9114);text-shadow:0 0 2px #fff,0 0 2px #fff;">elderland</div>
<div class="t" style="left:1122px;top:313.14px;font-size:14px;color:#4a4a4a;transform:scaleX(0.8864);text-shadow:0 0 2px #fff,0 0 2px #fff;">Utrecht</div>
<div class="t" style="left:1072.5px;top:282.87px;font-size:12px;color:#4a4a4a;transform:scaleX(0.8184);text-shadow:0 0 2px #fff,0 0 2px #fff;">Leiden</div>
<div class="t" style="left:1128.75px;top:241.14px;font-size:14px;color:#4a4a4a;transform:scaleX(0.8721);text-shadow:0 0 2px #fff,0 0 2px #fff;">dam</div>
<div class="t" style="left:1247px;top:383.12px;font-size:12px;color:#4a4a4a;transform:scaleX(0.8198);text-shadow:0 0 2px #fff,0 0 2px #fff;">Recklinghausen</div>
<div class="t" style="left:1270px;top:409.03px;font-size:13px;color:#4a4a4a;transform:scaleX(0.8301);text-shadow:0 0 2px #fff,0 0 2px #fff;">Essen</div>
<div class="t" style="left:1256px;top:437.63px;font-size:13px;color:#4a4a4a;transform:scaleX(0.9285);text-shadow:0 0 2px #fff,0 0 2px #fff;">Düsseldorf</div>
<div class="t" style="left:1292px;top:466.12px;font-size:12px;color:#4a4a4a;transform:scaleX(0.8262);text-shadow:0 0 2px #fff,0 0 2px #fff;">Solingen</div>
<div class="t" style="left:1289.5px;top:484.63px;font-size:13px;color:#4a4a4a;transform:scaleX(0.8643);text-shadow:0 0 2px #fff,0 0 2px #fff;">Köln</div>
<div class="t" style="left:1301.6px;top:520.72px;font-size:12px;color:#4a4a4a;transform:scaleX(0.8134);text-shadow:0 0 2px #fff,0 0 2px #fff;">Bonn</div>
<div class="t" style="left:1140.4px;top:510.02px;font-size:12px;color:#4a4a4a;transform:scaleX(0.8490);text-shadow:0 0 2px #fff,0 0 2px #fff;">Maastricht</div>
<div class="t" style="left:1209px;top:514.12px;font-size:12px;color:#4a4a4a;transform:scaleX(0.7862);text-shadow:0 0 2px #fff,0 0 2px #fff;">Aachen</div>
<div class="t" style="left:1339px;top:582.12px;font-size:12px;color:#4a4a4a;transform:scaleX(0.8069);text-shadow:0 0 2px #fff,0 0 2px #fff;">Koblenz</div>
<div class="t" style="left:1327px;top:405.12px;font-size:12px;color:#7a5a86;font-style:italic;transform:scaleX(0.8994);text-shadow:0 0 2px #fff,0 0 2px #fff;">Nordrhein-</div>
<div class="t" style="left:1331px;top:419.62px;font-size:12px;color:#7a5a86;font-style:italic;transform:scaleX(0.8844);text-shadow:0 0 2px #fff,0 0 2px #fff;">Westfalen</div>
<div class="t" style="left:1384.8px;top:114.23px;font-size:13px;color:#4a4a4a;transform:scaleX(0.7872);text-shadow:0 0 2px #fff,0 0 2px #fff;">Oldenburg</div>
<div class="t" style="left:1439px;top:144.14px;font-size:14px;color:#4a4a4a;transform:scaleX(0.8566);text-shadow:0 0 2px #fff,0 0 2px #fff;">Bremen</div>
<div class="t" style="left:1439px;top:201.92px;font-size:12px;color:#7a5a86;font-style:italic;transform:scaleX(0.8445);text-shadow:0 0 2px #fff,0 0 2px #fff;">Niedersachsen</div>
<div class="t" style="left:1514px;top:243.14px;font-size:14px;color:#4a4a4a;transform:scaleX(0.8566);text-shadow:0 0 2px #fff,0 0 2px #fff;">Hannover</div>
<div class="t" style="left:1607.8px;top:256.12px;font-size:12px;color:#4a4a4a;transform:scaleX(0.8474);text-shadow:0 0 2px #fff,0 0 2px #fff;">Wolfsburg</div>
<div class="t" style="left:1577px;top:282.92px;font-size:12px;color:#4a4a4a;transform:scaleX(0.8226);text-shadow:0 0 2px #fff,0 0 2px #fff;">Braunschweig</div>
<div class="t" style="left:1534px;top:301.72px;font-size:12px;color:#4a4a4a;transform:scaleX(0.8255);text-shadow:0 0 2px #fff,0 0 2px #fff;">Hildesheim</div>
<div class="t" style="left:1371px;top:263.82px;font-size:12px;color:#4a4a4a;transform:scaleX(0.8202);text-shadow:0 0 2px #fff,0 0 2px #fff;">Osnabrück</div>
<div class="t" style="left:1417px;top:324.12px;font-size:12px;color:#4a4a4a;transform:scaleX(0.8255);text-shadow:0 0 2px #fff,0 0 2px #fff;">Bielefeld</div>
<div class="t" style="left:1338px;top:331.12px;font-size:12px;color:#4a4a4a;transform:scaleX(0.8764);text-shadow:0 0 2px #fff,0 0 2px #fff;">Münster</div>
<div class="t" style="left:1839px;top:216.14px;font-size:14px;color:#4a4a4a;transform:scaleX(0.8567);text-shadow:0 0 2px #fff,0 0 2px #fff;">Berli</div>
<div class="t" style="left:1808px;top:259.12px;font-size:12px;color:#4a4a4a;transform:scaleX(0.8024);text-shadow:0 0 2px #fff,0 0 2px #fff;">Potsdam</div>
<div class="t" style="left:1677px;top:311.12px;font-size:12px;color:#7a5a86;font-style:italic;transform:scaleX(0.7495);text-shadow:0 0 2px #fff,0 0 2px #fff;">Sachsen-</div>
<div class="t" style="left:1681px;top:325.62px;font-size:12px;color:#7a5a86;font-style:italic;transform:scaleX(0.8815);text-shadow:0 0 2px #fff,0 0 2px #fff;">Anhalt</div>
<div class="t" style="left:1360px;top:363.12px;font-size:12px;color:#4a4a4a;transform:scaleX(0.8488);text-shadow:0 0 2px #fff,0 0 2px #fff;">Hamm</div>
<div class="t" style="left:1432px;top:357.12px;font-size:12px;color:#4a4a4a;transform:scaleX(0.8314);text-shadow:0 0 2px #fff,0 0 2px #fff;">Paderborn</div>
<div class="t" style="left:1535px;top:388.52px;font-size:12px;color:#4a4a4a;transform:scaleX(0.8454);text-shadow:0 0 2px #fff,0 0 2px #fff;">Göttingen</div>
<div class="t" style="left:1505px;top:424.62px;font-size:12px;color:#4a4a4a;transform:scaleX(0.7771);text-shadow:0 0 2px #fff,0 0 2px #fff;">Kassel</div>
<div class="t" style="left:1705.8px;top:397.12px;font-size:12px;color:#4a4a4a;transform:scaleX(0.7813);text-shadow:0 0 2px #fff,0 0 2px #fff;">Halle (Saale)</div>
<div class="t" style="left:1749px;top:418.74px;font-size:14px;color:#4a4a4a;transform:scaleX(0.8338);text-shadow:0 0 2px #fff,0 0 2px #fff;">Leipzig</div>
<div class="t" style="left:1794.7px;top:505.12px;font-size:12px;color:#4a4a4a;transform:scaleX(0.8069);text-shadow:0 0 2px #fff,0 0 2px #fff;">Chemnitz</div>
<div class="t" style="left:1653.6px;top:497.72px;font-size:12px;color:#7a5a86;font-style:italic;transform:scaleX(0.8474);text-shadow:0 0 2px #fff,0 0 2px #fff;">Thüringen</div>
<div class="t" style="left:1467.5px;top:561.62px;font-size:12px;color:#7a5a86;font-style:italic;transform:scaleX(0.7840);text-shadow:0 0 2px #fff,0 0 2px #fff;">Hessen</div>
<div class="t" style="left:1376px;top:498.12px;font-size:12px;color:#4a4a4a;transform:scaleX(0.8027);text-shadow:0 0 2px #fff,0 0 2px #fff;">Siegen</div>
<div style="position:absolute;left:55px;top:70px;width:1px;height:1010px;background:#e3e6e9"></div>
<div style="position:absolute;left:369px;top:70px;width:1px;height:1010px;background:#e3e6e9"></div>
<div style="position:absolute;left:56.5px;top:70.5px;width:311px;height:36px;border:1px solid #dfe3e7;border-radius:4px;background:#fff"></div>
<div class="t" style="left:64.5px;top:80.12px;font-size:15.5px;color:#3c3c3c;transform:scaleX(0.8513);">Actief</div>
<div style="position:absolute;left:59.5px;top:112.5px;width:56.9px;height:68.3px;border:1px solid #eef0f2;border-radius:5px;background:#fff"></div>
<div style="position:absolute;left:121.3px;top:112.5px;width:56.9px;height:68.3px;border:1px solid #eef0f2;border-radius:5px;background:#fff"></div>
<div style="position:absolute;left:183.2px;top:112.5px;width:56.9px;height:68.3px;border:1px solid #eef0f2;border-radius:5px;background:#fff"></div>
<div style="position:absolute;left:245.3px;top:112.5px;width:55.7px;height:68.3px;border:1px solid #eef0f2;border-radius:5px;background:#fff"></div>
<div style="position:absolute;left:305.3px;top:111.2px;width:57.7px;height:70.3px;border:2.6px solid #6b6b6b;border-radius:6px;background:#d2d2d2"></div>
<div class="t" style="left:323.5px;top:138.02px;font-size:15.5px;color:#333;transform:scaleX(0.8392);">Alle</div>
<svg style="position:absolute;left:70px;top:128px" width="40" height="36" viewBox="0 0 40 36">
<path d="M16.4 9.8 Q24 8.2 30.3 6.2 L30.3 26.3 Q24.5 19.8 16.4 17" fill="#fff" stroke="#5f6670" stroke-width="2.1" stroke-linejoin="round"/>
<rect x="4.5" y="8.9" width="12.2" height="9.6" rx="1.8" fill="#5f6670"/>
<path d="M8.4 18 L14.4 18 L14.9 24.5 C15.1 27.5 16.3 29 17 29.8 C16.2 31 13.6 31.5 12.2 30.6 C11 29.9 10.6 28.8 10.3 27.5 Z" fill="#5f6670"/>
<path d="M31 10.5 L33.8 13.2 L31 16Z" fill="#5f6670"/>
</svg>
<svg style="position:absolute;left:130px;top:124px" width="40" height="40" viewBox="0 0 40 40"><path d="M6.2 4.8 L34.9 20.1 L6.2 35.5 V23.6 L23 20.1 L6.2 16.7Z" fill="#5f95f2"/></svg>
<svg style="position:absolute;left:194px;top:124px" width="40" height="40" viewBox="0 0 40 40"><path d="M32.3 7.8 L4.1 20.1 L32.3 35.5 V23.6 L15.5 20.1 L32.3 16.7Z" fill="#5a9c25"/></svg>
<div style="position:absolute;left:269.2px;top:128.3px;width:7.2px;height:18.6px;background:#fa0a0a;border-radius:1px"></div>
<div style="position:absolute;left:269.4px;top:150px;width:7px;height:7.2px;background:#fa0a0a"></div>
<div style="position:absolute;left:91.6px;top:116.9px;width:21.8px;height:17.8px;background:#9a9a9a;border-radius:50%"></div>
<div class="t" style="left:96.7px;top:119.45px;font-size:13px;color:#fff;transform:scaleX(0.8017);">84</div>
<div style="position:absolute;left:158.75px;top:116.8px;width:16.3px;height:18px;background:#6a9ef4;border-radius:50%"></div>
<div class="t" style="left:163.7px;top:119.45px;font-size:13px;color:#fff;transform:scaleX(0.8847);">4</div>
<div style="position:absolute;left:220.55px;top:116.55px;width:16.5px;height:18.5px;background:#12e012;border-radius:50%"></div>
<div class="t" style="left:225.6px;top:119.45px;font-size:13px;color:#fff;transform:scaleX(0.8847);">4</div>
<div style="position:absolute;left:281.9px;top:116.35px;width:16.8px;height:18.9px;background:#e8544a;border-radius:50%"></div>
<div class="t" style="left:287.1px;top:119.45px;font-size:13px;color:#fff;transform:scaleX(0.8847);">0</div>
<div style="position:absolute;left:338.8px;top:117.2px;width:20px;height:18px;background:#9a9a9a;border-radius:50%"></div>
<div class="t" style="left:343px;top:119.85px;font-size:13px;color:#fff;transform:scaleX(0.8017);">84</div>
<div style="position:absolute;left:59.1px;top:185.7px;width:47.6px;height:46px;background:#f4f5f7"></div>
<svg style="position:absolute;left:66px;top:198px" width="24" height="24" viewBox="0 0 24 24">
<path d="M7.2 3.5 V18" stroke="#111" stroke-width="2.6"/>
<path d="M2.6 15.5 L7.2 21.5 L11.8 15.5Z" fill="#111"/>
<rect x="10.5" y="3.2" width="9" height="2.8" fill="#111"/>
<rect x="10.5" y="7.8" width="6.6" height="2.8" fill="#111"/>
<rect x="10.5" y="12.4" width="4.3" height="2.8" fill="#111"/>
</svg>
<div style="position:absolute;left:107.5px;top:185.7px;width:227.2px;height:45.5px;border:1px solid #dde1e5;border-radius:5px;background:#fff"></div>
<div class="t" style="left:115.7px;top:196.72px;font-size:15.5px;color:#7b7b7b;transform:scaleX(0.8259);">Zoeken</div>
<div style="position:absolute;left:339.7px;top:186.6px;width:24.6px;height:44.3px;border:2px solid #8a8e92;border-radius:5px;background:#fff"></div>
<div style="position:absolute;left:347.5px;top:210.6px;width:2.4px;height:2.6px;background:#555"></div>
<div style="position:absolute;left:351.2px;top:210.6px;width:2.4px;height:2.6px;background:#555"></div>
<div style="position:absolute;left:354.9px;top:210.6px;width:2.4px;height:2.6px;background:#555"></div>
<div style="position:absolute;left:352.5px;top:236.8px;width:16.5px;height:791.5px;background:#f1f1f1"></div>
<svg style="position:absolute;left:356px;top:243px" width="9" height="6" viewBox="0 0 9 6"><path d="M0.5 5.5 L4.5 0.5 L8.5 5.5Z" fill="#a3a3a3"/></svg>
<svg style="position:absolute;left:356px;top:1015px" width="9" height="6" viewBox="0 0 9 6"><path d="M0.5 0.5 L4.5 5.5 L8.5 0.5Z" fill="#505050"/></svg>
<div style="position:absolute;left:354.2px;top:255.4px;width:12.8px;height:50.1px;background:#c1c1c1"></div>
<div style="position:absolute;left:60px;top:241.25px;width:41.7px;height:27.7px;border:2px solid #22e51f;border-radius:4px"></div>
<div class="t" style="left:66.25px;top:248.38px;font-size:15.5px;color:#3c3c3c;transform:scaleX(0.7733);">14:06</div>
<div class="t" style="left:107.4px;top:248.38px;font-size:15.5px;color:#3c3c3c;transform:scaleX(0.7872);">2 Best</div>
<svg style="position:absolute;left:331.5px;top:244.45px" width="15" height="19" viewBox="0 0 15 19"><ellipse cx="7.5" cy="9.5" rx="6.8" ry="8.9" fill="#111"/><rect x="6.3" y="3.6" width="2.4" height="2.4" fill="#fff"/><path d="M5 7.3h3.6v6.6h1.4v1.6H5v-1.6h1.4V8.9H5Z" fill="#fff"/></svg>
<div style="position:absolute;left:67.2px;top:276.75px;width:30.4px;height:27px;border:1.6px solid #8d9298;border-radius:4px;background:#fff"></div>
<svg style="position:absolute;left:72.4px;top:281.75px" width="20" height="18" viewBox="0 0 20 18"><ellipse cx="10" cy="7.5" rx="6.8" ry="5.2" fill="#5f656b"/><path d="M6 11 L4.5 16 L10.5 11.5Z" fill="#5f656b"/></svg>
<div class="t" style="left:109.3px;top:281.47px;font-size:15.5px;color:#3c3c3c;transform:scaleX(0.8241);">M190-74-BGZ-4   BNL 01MEP-</div>
<div class="t" style="left:59.6px;top:308.82px;font-size:15.5px;color:#3c3c3c;transform:scaleX(0.8475);">Algemeen</div>
<div class="t" style="left:67.5px;top:339.72px;font-size:15.5px;color:#3c3c3c;transform:scaleX(0.8086);">229-OJ-44-GF</div>
<div style="position:absolute;left:56px;top:369.7px;width:297px;height:2px;background:#e9ecef"></div>
<div style="position:absolute;left:60px;top:376.2px;width:41.7px;height:27.7px;border:2px solid #8e2a9c;border-radius:4px"></div>
<div class="t" style="left:66.25px;top:383.32px;font-size:15.5px;color:#3c3c3c;transform:scaleX(0.7733);">14:40</div>
<div class="t" style="left:107.4px;top:383.32px;font-size:15.5px;color:#3c3c3c;transform:scaleX(0.8385);">Ad Glimmerveen</div>
<svg style="position:absolute;left:331.5px;top:379.4px" width="15" height="19" viewBox="0 0 15 19"><ellipse cx="7.5" cy="9.5" rx="6.8" ry="8.9" fill="#111"/><rect x="6.3" y="3.6" width="2.4" height="2.4" fill="#fff"/><path d="M5 7.3h3.6v6.6h1.4v1.6H5v-1.6h1.4V8.9H5Z" fill="#fff"/></svg>
<div style="position:absolute;left:67.2px;top:411.7px;width:30.4px;height:27px;border:1.6px solid #8d9298;border-radius:4px;background:#fff"></div>
<svg style="position:absolute;left:72.4px;top:416.7px" width="20" height="18" viewBox="0 0 20 18"><ellipse cx="10" cy="7.5" rx="6.8" ry="5.2" fill="#5f656b"/><path d="M6 11 L4.5 16 L10.5 11.5Z" fill="#5f656b"/></svg>
<div class="t" style="left:109.3px;top:416.42px;font-size:15.5px;color:#3c3c3c;transform:scaleX(0.8309);">352-43-BPV-4   BNL 01TLB-Noord</div>
<div class="t" style="left:67.2px;top:450.82px;font-size:15.5px;color:#3c3c3c;transform:scaleX(0.8298);">4044-OS-12-DL</div>
<div style="position:absolute;left:60.5px;top:479px;width:69.8px;height:29.5px;background:#a82828;border-radius:15px"></div>
<div class="t" style="left:72px;top:486.25px;font-size:15px;color:#fff;transform:scaleX(0.7878);">Planning</div>
<div style="position:absolute;left:56px;top:516.5px;width:297px;height:2px;background:#e9ecef"></div>
<div style="position:absolute;left:60px;top:524.5px;width:41.7px;height:27.7px;border:2px solid #22e51f;border-radius:4px"></div>
<div class="t" style="left:66.25px;top:531.62px;font-size:15.5px;color:#3c3c3c;transform:scaleX(0.7733);">14:53</div>
<div class="t" style="left:107.4px;top:531.62px;font-size:15.5px;color:#3c3c3c;transform:scaleX(0.8610);">André Nooren</div>
<svg style="position:absolute;left:331.5px;top:527.7px" width="15" height="19" viewBox="0 0 15 19"><ellipse cx="7.5" cy="9.5" rx="6.8" ry="8.9" fill="#111"/><rect x="6.3" y="3.6" width="2.4" height="2.4" fill="#fff"/><path d="M5 7.3h3.6v6.6h1.4v1.6H5v-1.6h1.4V8.9H5Z" fill="#fff"/></svg>
<div style="position:absolute;left:67.2px;top:560px;width:30.4px;height:27px;border:1.6px solid #8d9298;border-radius:4px;background:#fff"></div>
<svg style="position:absolute;left:72.4px;top:565px" width="20" height="18" viewBox="0 0 20 18"><ellipse cx="10" cy="7.5" rx="6.8" ry="5.2" fill="#5f656b"/><path d="M6 11 L4.5 16 L10.5 11.5Z" fill="#5f656b"/></svg>
<div class="t" style="left:109.3px;top:564.73px;font-size:15.5px;color:#3c3c3c;transform:scaleX(0.8310);">199-14-BGZ-8   BNL 02TLB-Midden</div>
<div class="t" style="left:67px;top:599.12px;font-size:15.5px;color:#3c3c3c;transform:scaleX(0.8300);">4010-OR-99-VB</div>
<div style="position:absolute;left:60.5px;top:627.3px;width:69.8px;height:29.5px;background:#a82828;border-radius:15px"></div>
<div class="t" style="left:72px;top:634.55px;font-size:15px;color:#fff;transform:scaleX(0.7878);">Planning</div>
<div style="position:absolute;left:56px;top:664px;width:297px;height:2px;background:#e9ecef"></div>
<div style="position:absolute;left:60px;top:671px;width:41.7px;height:27.7px;border:2px solid #8e2a9c;border-radius:4px"></div>
<div class="t" style="left:66.25px;top:678.12px;font-size:15.5px;color:#3c3c3c;transform:scaleX(0.7733);">14:54</div>
<div class="t" style="left:107.4px;top:678.12px;font-size:15.5px;color:#3c3c3c;transform:scaleX(0.8424);">Andre Pedro Vulu</div>
<svg style="position:absolute;left:331.5px;top:674.2px" width="15" height="19" viewBox="0 0 15 19"><ellipse cx="7.5" cy="9.5" rx="6.8" ry="8.9" fill="#111"/><rect x="6.3" y="3.6" width="2.4" height="2.4" fill="#fff"/><path d="M5 7.3h3.6v6.6h1.4v1.6H5v-1.6h1.4V8.9H5Z" fill="#fff"/></svg>
<div style="position:absolute;left:67.2px;top:706.5px;width:30.4px;height:27px;border:1.6px solid #8d9298;border-radius:4px;background:#fff"></div>
<svg style="position:absolute;left:72.4px;top:711.5px" width="20" height="18" viewBox="0 0 20 18"><ellipse cx="10" cy="7.5" rx="6.8" ry="5.2" fill="#5f656b"/><path d="M6 11 L4.5 16 L10.5 11.5Z" fill="#5f656b"/></svg>
<div class="t" style="left:109.3px;top:711.23px;font-size:15.5px;color:#3c3c3c;transform:scaleX(0.8240);">614-57-BKD-7   BNL 03TLB-Zuid</div>
<div class="t" style="left:67px;top:745.62px;font-size:15.5px;color:#3c3c3c;transform:scaleX(0.8518);">onbekend</div>
<div style="position:absolute;left:56px;top:776px;width:297px;height:2px;background:#e9ecef"></div>
<div style="position:absolute;left:60px;top:782.9px;width:41.7px;height:27.7px;border:2px solid #22e51f;border-radius:4px"></div>
<div class="t" style="left:66.25px;top:790.02px;font-size:15.5px;color:#3c3c3c;transform:scaleX(0.7733);">14:50</div>
<div class="t" style="left:107.4px;top:790.02px;font-size:15.5px;color:#3c3c3c;transform:scaleX(0.8234);">Bart Melsen</div>
<svg style="position:absolute;left:331.5px;top:786.1px" width="15" height="19" viewBox="0 0 15 19"><ellipse cx="7.5" cy="9.5" rx="6.8" ry="8.9" fill="#111"/><rect x="6.3" y="3.6" width="2.4" height="2.4" fill="#fff"/><path d="M5 7.3h3.6v6.6h1.4v1.6H5v-1.6h1.4V8.9H5Z" fill="#fff"/></svg>
<div style="position:absolute;left:67.2px;top:818.4px;width:30.4px;height:27px;border:1.6px solid #8d9298;border-radius:4px;background:#fff"></div>
<svg style="position:absolute;left:72.4px;top:823.4px" width="20" height="18" viewBox="0 0 20 18"><ellipse cx="10" cy="7.5" rx="6.8" ry="5.2" fill="#5f656b"/><path d="M6 11 L4.5 16 L10.5 11.5Z" fill="#5f656b"/></svg>
<div class="t" style="left:109.3px;top:823.12px;font-size:15.5px;color:#3c3c3c;transform:scaleX(0.8330);">347-50-BNN-6   BNL 03TLB-Zuid</div>
<div class="t" style="left:60px;top:857.23px;font-size:15.5px;color:#3c3c3c;transform:scaleX(0.8215);">LM:4   586-OP-93-FZ</div>
<div style="position:absolute;left:60.5px;top:884px;width:69.8px;height:29.5px;background:#a82828;border-radius:15px"></div>
<div class="t" style="left:72px;top:891.25px;font-size:15px;color:#fff;transform:scaleX(0.7878);">Planning</div>
<div style="position:absolute;left:56px;top:921.8px;width:297px;height:2px;background:#e9ecef"></div>
<div style="position:absolute;left:60px;top:929px;width:41.7px;height:27.7px;border:2px solid #22e51f;border-radius:4px"></div>
<div class="t" style="left:66.25px;top:936.12px;font-size:15.5px;color:#3c3c3c;transform:scaleX(0.7733);">14:35</div>
<div class="t" style="left:107.4px;top:936.12px;font-size:15.5px;color:#3c3c3c;transform:scaleX(0.7756);">Bas Kisters</div>
<svg style="position:absolute;left:331.5px;top:932.2px" width="15" height="19" viewBox="0 0 15 19"><ellipse cx="7.5" cy="9.5" rx="6.8" ry="8.9" fill="#111"/><rect x="6.3" y="3.6" width="2.4" height="2.4" fill="#fff"/><path d="M5 7.3h3.6v6.6h1.4v1.6H5v-1.6h1.4V8.9H5Z" fill="#fff"/></svg>
<div style="position:absolute;left:67.2px;top:964.5px;width:30.4px;height:27px;border:1.6px solid #8d9298;border-radius:4px;background:#fff"></div>
<svg style="position:absolute;left:72.4px;top:969.5px" width="20" height="18" viewBox="0 0 20 18"><ellipse cx="10" cy="7.5" rx="6.8" ry="5.2" fill="#5f656b"/><path d="M6 11 L4.5 16 L10.5 11.5Z" fill="#5f656b"/></svg>
<div class="t" style="left:109.3px;top:969.23px;font-size:15.5px;color:#3c3c3c;transform:scaleX(0.8159);">605-65-BFL-5   BNL 03TLB-Zuid</div>
<div class="t" style="left:60px;top:1003.62px;font-size:15.5px;color:#3c3c3c;transform:scaleX(0.8380);">LM:4.5   onbekend</div>
<div style="position:absolute;left:370px;top:605px;width:1495px;height:6.9px;background:#dee2e6"></div>
<div style="position:absolute;left:1109.5px;top:605px;width:16.5px;height:8.7px;background:#fff"></div>
<div style="position:absolute;left:1111.2px;top:603.6px;width:12.6px;height:2.5px;background:#7a808a;border-radius:1px"></div>
<div style="position:absolute;left:1111.2px;top:610.6px;width:12.6px;height:2.5px;background:#7a808a;border-radius:1px"></div>
<div style="position:absolute;left:364.6px;top:575px;width:4.6px;height:20px;background:#fff;border-radius:2px"></div>
<div style="position:absolute;left:365.4px;top:577px;width:1.9px;height:16.3px;background:#555c66;border-radius:1px"></div>
<div style="position:absolute;left:369.5px;top:611.5px;width:1.5px;height:468.5px;background:#e3e6e9"></div>
<div style="position:absolute;left:1864.5px;top:70px;width:1.5px;height:1010px;background:#e3e6e9"></div>
<div style="position:absolute;left:369px;top:69.6px;width:1497px;height:1.4px;background:#e3e6e9"></div>
<div style="position:absolute;left:371px;top:647px;width:996.3px;height:1.6px;background:#e3e6ea"></div>
<div style="position:absolute;left:1540.2px;top:647px;width:324.3px;height:1.6px;background:#e3e6ea"></div>
<div style="position:absolute;left:1367.3px;top:613.2px;width:173px;height:35.4px;border:1.4px solid #e3e6ea;border-bottom:none;border-radius:5px 5px 0 0;background:#fff"></div>
<div class="t" style="left:384.3px;top:624.75px;font-size:15px;color:#4c86ee;transform:scaleX(0.8605);">Vertrek</div>
<div style="position:absolute;left:430px;top:623.4px;width:14.5px;height:18.6px;background:#8a8a8a;border-radius:50%"></div>
<div class="t" style="left:434.15px;top:626.25px;font-size:13px;color:#fff;transform:scaleX(0.8570);">0</div>
<div class="t" style="left:467.7px;top:624.75px;font-size:15px;color:#4c86ee;transform:scaleX(0.8584);">Stilstand</div>
<div style="position:absolute;left:520.5px;top:623.4px;width:15.5px;height:18.6px;background:#8a8a8a;border-radius:50%"></div>
<div class="t" style="left:525.15px;top:626.25px;font-size:13px;color:#fff;transform:scaleX(0.8570);">3</div>
<div class="t" style="left:559px;top:624.75px;font-size:15px;color:#4c86ee;transform:scaleX(0.8826);">Voortgang Stops</div>
<div class="t" style="left:683.8px;top:624.75px;font-size:15px;color:#4c86ee;transform:scaleX(0.8765);">Uitloop Stops</div>
<div style="position:absolute;left:765.8px;top:623.4px;width:20.9px;height:18.6px;background:#8a8a8a;border-radius:50%"></div>
<div class="t" style="left:770.65px;top:626.25px;font-size:13px;color:#fff;transform:scaleX(0.7741);">55</div>
<div class="t" style="left:805.3px;top:624.75px;font-size:15px;color:#4c86ee;transform:scaleX(0.8313);">Geo Zones</div>
<div style="position:absolute;left:871.7px;top:623.4px;width:14.55px;height:18.6px;background:#8a8a8a;border-radius:50%"></div>
<div class="t" style="left:875.88px;top:626.25px;font-size:13px;color:#fff;transform:scaleX(0.8570);">0</div>
<div class="t" style="left:909.6px;top:624.75px;font-size:15px;color:#4c86ee;transform:scaleX(0.8957);">Offline</div>
<div style="position:absolute;left:952.2px;top:623.4px;width:15.4px;height:18.6px;background:#8a8a8a;border-radius:50%"></div>
<div class="t" style="left:956.8px;top:626.25px;font-size:13px;color:#fff;transform:scaleX(0.8570);">0</div>
<div class="t" style="left:991.25px;top:624.75px;font-size:15px;color:#4c86ee;transform:scaleX(0.8006);">Taken</div>
<div style="position:absolute;left:1027px;top:623.4px;width:16px;height:18.6px;background:#8a8a8a;border-radius:50%"></div>
<div class="t" style="left:1031.9px;top:626.25px;font-size:13px;color:#fff;transform:scaleX(0.8570);">0</div>
<div class="t" style="left:1065.6px;top:624.75px;font-size:15px;color:#4c86ee;transform:scaleX(0.8657);">Berichten In</div>
<div style="position:absolute;left:1139.3px;top:623.4px;width:14.7px;height:18.6px;background:#8a8a8a;border-radius:50%"></div>
<div class="t" style="left:1143.55px;top:626.25px;font-size:13px;color:#fff;transform:scaleX(0.8570);">3</div>
<div class="t" style="left:1177.7px;top:624.75px;font-size:15px;color:#4c86ee;transform:scaleX(0.8178);">Track&amp;Trace</div>
<div style="position:absolute;left:1251.25px;top:623.4px;width:15px;height:18.6px;background:#8a8a8a;border-radius:50%"></div>
<div class="t" style="left:1255.65px;top:626.25px;font-size:13px;color:#fff;transform:scaleX(0.8570);">0</div>
<div class="t" style="left:1289.6px;top:624.75px;font-size:15px;color:#4c86ee;transform:scaleX(0.8750);">Ritlijst</div>
<div style="position:absolute;left:1332.5px;top:623.4px;width:20.2px;height:18.6px;background:#8a8a8a;border-radius:50%"></div>
<div class="t" style="left:1337px;top:626.25px;font-size:13px;color:#fff;transform:scaleX(0.7741);">84</div>
<div class="t" style="left:1379.2px;top:625.25px;font-size:15px;color:#585858;transform:scaleX(0.8664);">Alle Berichten</div>
<div style="position:absolute;left:1467.3px;top:621.5px;width:14.6px;height:19.8px;background:#5b95f0;border-radius:50%"></div>
<div class="t" style="left:1471.5px;top:624.95px;font-size:13px;color:#fff;transform:scaleX(0.8570);">4</div>
<div style="position:absolute;left:1489.2px;top:621.5px;width:16.6px;height:19.8px;background:#16e016;border-radius:50%"></div>
<div class="t" style="left:1494.4px;top:624.95px;font-size:13px;color:#fff;transform:scaleX(0.8570);">4</div>
<div style="position:absolute;left:1513.1px;top:621.5px;width:15.65px;height:19.8px;background:#ee1111;border-radius:50%"></div>
<div class="t" style="left:1517.83px;top:624.95px;font-size:13px;color:#fff;transform:scaleX(0.8570);">0</div>
<div class="t" style="left:620.3px;top:662.55px;font-size:15px;color:#222;font-weight:bold;transform:scaleX(0.8600);">Rit</div>
<div class="t" style="left:691px;top:662.55px;font-size:15px;color:#222;font-weight:bold;transform:scaleX(0.8833);">Afdeling</div>
<div class="t" style="left:828.6px;top:662.55px;font-size:15px;color:#222;font-weight:bold;transform:scaleX(0.8667);">Chauffeur</div>
<div class="t" style="left:923.7px;top:662.55px;font-size:15px;color:#222;font-weight:bold;transform:scaleX(0.8559);">Kenteken</div>
<div class="t" style="left:1018px;top:662.55px;font-size:15px;color:#222;font-weight:bold;transform:scaleX(0.8867);">Verzonden door</div>
<div class="t" style="left:1139.3px;top:662.55px;font-size:15px;color:#222;font-weight:bold;transform:scaleX(0.8865);">Onderwerp</div>
<div class="t" style="left:1282px;top:662.55px;font-size:15px;color:#222;font-weight:bold;transform:scaleX(0.8272);">Tekst</div>
<div class="t" style="left:1732.7px;top:662.55px;font-size:15px;color:#222;font-weight:bold;transform:scaleX(0.8740);">Verzonden</div>
<div style="position:absolute;left:380px;top:686.8px;width:1474px;height:2.2px;background:#e2e4e6"></div>
<div style="position:absolute;left:380px;top:689px;width:1459.8px;height:40.5px;background:#fff"></div>
<div style="position:absolute;left:380px;top:729.5px;width:1459.8px;height:31.5px;background:#f2f2f5"></div>
<div style="position:absolute;left:380px;top:761px;width:1459.8px;height:46px;background:#fff"></div>
<div style="position:absolute;left:380px;top:807px;width:1459.8px;height:45.9px;background:#f2f2f5"></div>
<div style="position:absolute;left:380px;top:852.9px;width:1459.8px;height:32.1px;background:#fff"></div>
<div style="position:absolute;left:380px;top:885px;width:1459.8px;height:31.4px;background:#f2f2f5"></div>
<div style="position:absolute;left:380px;top:916.4px;width:1459.8px;height:46.9px;background:#fff"></div>
<div style="position:absolute;left:380px;top:963.3px;width:1459.8px;height:45.6px;background:#f2f2f5"></div>
<div style="position:absolute;left:380px;top:1008.9px;width:1459.8px;height:33.6px;background:#fff"></div>
<svg style="position:absolute;left:385.6px;top:695.2px" width="14" height="13" viewBox="0 0 14 13"><path d="M12.6 0.3 L0.5 6.4 L12.6 12.6 V8.6 L5.5 6.4 L12.6 4.3Z" fill="#4f9a1f"/></svg>
<svg style="position:absolute;left:408.3px;top:695.2px" width="16" height="12" viewBox="0 0 16 12"><path d="M0.8 6.5 L4 10.5 L10.5 1 M5.5 7.5 L7 10.5 L15 1" fill="none" stroke="#333" stroke-width="1.7"/></svg>
<div style="position:absolute;left:458px;top:694.6px;width:2.6px;height:8.2px;background:#555;border-radius:1px"></div>
<div style="position:absolute;left:458px;top:704.4px;width:2.6px;height:2.6px;background:#555"></div>
<div style="position:absolute;left:478px;top:691px;width:64px;height:36.2px;background:#198a55;border-radius:5px"></div>
<div class="t" style="left:487px;top:701.62px;font-size:15.5px;color:#fff;transform:scaleX(0.8054);">Gelezen</div>
<div style="position:absolute;left:548.9px;top:691px;width:26.4px;height:36.2px;background:#6c757d;border-radius:5px"></div>
<svg style="position:absolute;left:557.1px;top:706px" width="10" height="7" viewBox="0 0 10 7"><path d="M0.5 0.8 L5 6 L9.5 0.8Z" fill="#fff"/></svg>
<div style="position:absolute;left:788.8px;top:692.2px;width:30px;height:27px;border:1.4px solid #80868c;border-radius:5px;background:#fff"></div>
<svg style="position:absolute;left:794.8px;top:697.7px" width="18" height="16" viewBox="0 0 18 16"><path d="M7.5 2.5 C4 2.5 1.6 4.6 1.6 7 C1.6 8.3 2.3 9.4 3.4 10.2 L2.8 12.6 L5.6 11.2 C6.2 11.4 6.8 11.5 7.5 11.5 C11 11.5 13.4 9.4 13.4 7 C13.4 4.6 11 2.5 7.5 2.5Z" fill="#fff" stroke="#555" stroke-width="1.3"/><path d="M14.2 6.2 C15.6 6.9 16.4 8 16.4 9.3 C16.4 10.3 15.9 11.2 15.1 11.8 L15.6 14 L13 12.8 C12.5 12.9 12 13 11.4 13 C9.8 13 8.4 12.5 7.6 11.6" fill="none" stroke="#555" stroke-width="1.3"/></svg>
<div class="t" style="left:620.5px;top:695.88px;font-size:14.5px;color:#454545;transform:scaleX(0.7650);">3285</div>
<div class="t" style="left:692.5px;top:695.88px;font-size:14.5px;color:#454545;transform:scaleX(0.7650);">BNL 01TLB-Noord</div>
<div class="t" style="left:828.8px;top:695.88px;font-size:14.5px;color:#454545;transform:scaleX(0.7650);">Ludo Vosters</div>
<div class="t" style="left:924.2px;top:695.88px;font-size:14.5px;color:#454545;transform:scaleX(0.7650);">196-11-BGZ-8</div>
<div class="t" style="left:1140.5px;top:695.88px;font-size:14.5px;color:#454545;transform:scaleX(0.7650);">14:59:</div>
<div class="t" style="left:1282.5px;top:695.88px;font-size:14.5px;color:#454545;transform:scaleX(0.7900);">nog niet geladen, gaat nog wel ff duren .</div>
<div class="t" style="left:1732.7px;top:695.88px;font-size:14.5px;color:#454545;transform:scaleX(0.7649);">22-03-2023 14:59:29</div>
<svg style="position:absolute;left:385.6px;top:735.7px" width="14" height="13" viewBox="0 0 14 13"><path d="M12.6 0.3 L0.5 6.4 L12.6 12.6 V8.6 L5.5 6.4 L12.6 4.3Z" fill="#4f9a1f"/></svg>
<svg style="position:absolute;left:408.3px;top:735.7px" width="16" height="12" viewBox="0 0 16 12"><path d="M0.8 6.5 L4 10.5 L10.5 1 M5.5 7.5 L7 10.5 L15 1" fill="none" stroke="#3ee83a" stroke-width="1.7"/></svg>
<div style="position:absolute;left:458px;top:735.1px;width:2.6px;height:8.2px;background:#555;border-radius:1px"></div>
<div style="position:absolute;left:458px;top:744.9px;width:2.6px;height:2.6px;background:#555"></div>
<div style="position:absolute;left:788.8px;top:732.7px;width:30px;height:27px;border:1.4px solid #80868c;border-radius:5px;background:#fff"></div>
<svg style="position:absolute;left:794.8px;top:738.2px" width="18" height="16" viewBox="0 0 18 16"><path d="M7.5 2.5 C4 2.5 1.6 4.6 1.6 7 C1.6 8.3 2.3 9.4 3.4 10.2 L2.8 12.6 L5.6 11.2 C6.2 11.4 6.8 11.5 7.5 11.5 C11 11.5 13.4 9.4 13.4 7 C13.4 4.6 11 2.5 7.5 2.5Z" fill="#fff" stroke="#555" stroke-width="1.3"/><path d="M14.2 6.2 C15.6 6.9 16.4 8 16.4 9.3 C16.4 10.3 15.9 11.2 15.1 11.8 L15.6 14 L13 12.8 C12.5 12.9 12 13 11.4 13 C9.8 13 8.4 12.5 7.6 11.6" fill="none" stroke="#555" stroke-width="1.3"/></svg>
<div class="t" style="left:620.5px;top:736.38px;font-size:14.5px;color:#454545;transform:scaleX(0.7650);">96159</div>
<div class="t" style="left:692.5px;top:736.38px;font-size:14.5px;color:#454545;transform:scaleX(0.7650);">BNL 03TLB-Zuid</div>
<div class="t" style="left:828.8px;top:736.38px;font-size:14.5px;color:#454545;transform:scaleX(0.7650);">Hans Rutjes</div>
<div class="t" style="left:924.2px;top:736.38px;font-size:14.5px;color:#454545;transform:scaleX(0.7650);">174-38-BFG-2</div>
<div class="t" style="left:1140.5px;top:736.38px;font-size:14.5px;color:#454545;transform:scaleX(0.7650);">14:59</div>
<div class="t" style="left:1282.5px;top:736.38px;font-size:14.5px;color:#454545;transform:scaleX(0.7900);">ok</div>
<div class="t" style="left:1732.7px;top:736.38px;font-size:14.5px;color:#454545;transform:scaleX(0.7649);">22-03-2023 14:59:33</div>
<svg style="position:absolute;left:385.6px;top:767.2px" width="14" height="13" viewBox="0 0 14 13"><path d="M12.6 0.3 L0.5 6.4 L12.6 12.6 V8.6 L5.5 6.4 L12.6 4.3Z" fill="#4f9a1f"/></svg>
<svg style="position:absolute;left:411.5px;top:767.2px" width="14" height="12" viewBox="0 0 14 12"><path d="M1 6.5 L4.5 10.5 L12 1" fill="none" stroke="#333" stroke-width="1.8"/></svg>
<div style="position:absolute;left:458px;top:766.6px;width:2.6px;height:8.2px;background:#555;border-radius:1px"></div>
<div style="position:absolute;left:458px;top:776.4px;width:2.6px;height:2.6px;background:#555"></div>
<div style="position:absolute;left:478px;top:763px;width:64px;height:36.2px;background:#198a55;border-radius:5px"></div>
<div class="t" style="left:487px;top:773.62px;font-size:15.5px;color:#fff;transform:scaleX(0.8054);">Gelezen</div>
<div style="position:absolute;left:548.9px;top:763px;width:26.4px;height:36.2px;background:#6c757d;border-radius:5px"></div>
<svg style="position:absolute;left:557.1px;top:778px" width="10" height="7" viewBox="0 0 10 7"><path d="M0.5 0.8 L5 6 L9.5 0.8Z" fill="#fff"/></svg>
<div style="position:absolute;left:788.8px;top:764.2px;width:30px;height:27px;border:1.4px solid #80868c;border-radius:5px;background:#fff"></div>
<svg style="position:absolute;left:794.8px;top:769.7px" width="18" height="16" viewBox="0 0 18 16"><path d="M7.5 2.5 C4 2.5 1.6 4.6 1.6 7 C1.6 8.3 2.3 9.4 3.4 10.2 L2.8 12.6 L5.6 11.2 C6.2 11.4 6.8 11.5 7.5 11.5 C11 11.5 13.4 9.4 13.4 7 C13.4 4.6 11 2.5 7.5 2.5Z" fill="#fff" stroke="#555" stroke-width="1.3"/><path d="M14.2 6.2 C15.6 6.9 16.4 8 16.4 9.3 C16.4 10.3 15.9 11.2 15.1 11.8 L15.6 14 L13 12.8 C12.5 12.9 12 13 11.4 13 C9.8 13 8.4 12.5 7.6 11.6" fill="none" stroke="#555" stroke-width="1.3"/></svg>
<div class="t" style="left:620.5px;top:767.88px;font-size:14.5px;color:#454545;transform:scaleX(0.7650);">103168</div>
<div class="t" style="left:692.5px;top:767.88px;font-size:14.5px;color:#454545;transform:scaleX(0.7650);">BNL 02TLB-</div>
<div class="t" style="left:692.5px;top:788.17px;font-size:14.5px;color:#454545;transform:scaleX(0.7650);">Midden</div>
<div class="t" style="left:828.8px;top:767.88px;font-size:14.5px;color:#454545;transform:scaleX(0.7650);">Peter</div>
<div class="t" style="left:828.8px;top:788.17px;font-size:14.5px;color:#454545;transform:scaleX(0.7650);">Beerendonk, van</div>
<div class="t" style="left:924.2px;top:767.88px;font-size:14.5px;color:#454545;transform:scaleX(0.7650);">343-47-BNG-2</div>
<div class="t" style="left:1140.5px;top:767.88px;font-size:14.5px;color:#454545;transform:scaleX(0.7650);">14:59 RE: 9lm</div>
<div class="t" style="left:1282.5px;top:767.88px;font-size:14.5px;color:#454545;transform:scaleX(0.7900);">oké!</div>
<div class="t" style="left:1732.7px;top:767.88px;font-size:14.5px;color:#454545;transform:scaleX(0.7649);">22-03-2023 14:59:19</div>
<svg style="position:absolute;left:384.3px;top:813px" width="14" height="14" viewBox="0 0 14 14"><path d="M0.5 0.3 L13 7 L0.5 13.7 V9 L7 7 L0.5 5Z" fill="#5a8ff0"/></svg>
<svg style="position:absolute;left:408.3px;top:813.2px" width="16" height="12" viewBox="0 0 16 12"><path d="M0.8 6.5 L4 10.5 L10.5 1 M5.5 7.5 L7 10.5 L15 1" fill="none" stroke="#3ee83a" stroke-width="1.7"/></svg>
<div style="position:absolute;left:788.8px;top:810.2px;width:30px;height:27px;border:1.4px solid #80868c;border-radius:5px;background:#fff"></div>
<svg style="position:absolute;left:794.8px;top:815.7px" width="18" height="16" viewBox="0 0 18 16"><path d="M7.5 2.5 C4 2.5 1.6 4.6 1.6 7 C1.6 8.3 2.3 9.4 3.4 10.2 L2.8 12.6 L5.6 11.2 C6.2 11.4 6.8 11.5 7.5 11.5 C11 11.5 13.4 9.4 13.4 7 C13.4 4.6 11 2.5 7.5 2.5Z" fill="#fff" stroke="#555" stroke-width="1.3"/><path d="M14.2 6.2 C15.6 6.9 16.4 8 16.4 9.3 C16.4 10.3 15.9 11.2 15.1 11.8 L15.6 14 L13 12.8 C12.5 12.9 12 13 11.4 13 C9.8 13 8.4 12.5 7.6 11.6" fill="none" stroke="#555" stroke-width="1.3"/></svg>
<div class="t" style="left:620.5px;top:813.88px;font-size:14.5px;color:#454545;transform:scaleX(0.7650);">103168</div>
<div class="t" style="left:692.5px;top:813.88px;font-size:14.5px;color:#454545;transform:scaleX(0.7650);">BNL 02TLB-</div>
<div class="t" style="left:692.5px;top:834.17px;font-size:14.5px;color:#454545;transform:scaleX(0.7650);">Midden</div>
<div class="t" style="left:828.8px;top:813.88px;font-size:14.5px;color:#454545;transform:scaleX(0.7650);">Peter</div>
<div class="t" style="left:828.8px;top:834.17px;font-size:14.5px;color:#454545;transform:scaleX(0.7650);">Beerendonk, van</div>
<div class="t" style="left:924.2px;top:813.88px;font-size:14.5px;color:#454545;transform:scaleX(0.7650);">343-47-BNG-2</div>
<div class="t" style="left:1018.5px;top:813.88px;font-size:14.5px;color:#454545;transform:scaleX(0.7650);">Hans</div>
<div class="t" style="left:1140.5px;top:813.88px;font-size:14.5px;color:#454545;transform:scaleX(0.7650);">14:59 9lm</div>
<div class="t" style="left:1282.5px;top:813.88px;font-size:14.5px;color:#454545;transform:scaleX(0.7900);">kom maar deze kant op. mocht er wat komen zal ik je een berichtje sturen</div>
<div class="t" style="left:1732.7px;top:813.88px;font-size:14.5px;color:#454545;transform:scaleX(0.7649);">22-03-2023 14:59:06</div>
<svg style="position:absolute;left:384.3px;top:858.9px" width="14" height="14" viewBox="0 0 14 14"><path d="M0.5 0.3 L13 7 L0.5 13.7 V9 L7 7 L0.5 5Z" fill="#5a8ff0"/></svg>
<svg style="position:absolute;left:408.3px;top:859.1px" width="16" height="12" viewBox="0 0 16 12"><path d="M0.8 6.5 L4 10.5 L10.5 1 M5.5 7.5 L7 10.5 L15 1" fill="none" stroke="#3ee83a" stroke-width="1.7"/></svg>
<div style="position:absolute;left:788.8px;top:856.1px;width:30px;height:27px;border:1.4px solid #80868c;border-radius:5px;background:#fff"></div>
<svg style="position:absolute;left:794.8px;top:861.6px" width="18" height="16" viewBox="0 0 18 16"><path d="M7.5 2.5 C4 2.5 1.6 4.6 1.6 7 C1.6 8.3 2.3 9.4 3.4 10.2 L2.8 12.6 L5.6 11.2 C6.2 11.4 6.8 11.5 7.5 11.5 C11 11.5 13.4 9.4 13.4 7 C13.4 4.6 11 2.5 7.5 2.5Z" fill="#fff" stroke="#555" stroke-width="1.3"/><path d="M14.2 6.2 C15.6 6.9 16.4 8 16.4 9.3 C16.4 10.3 15.9 11.2 15.1 11.8 L15.6 14 L13 12.8 C12.5 12.9 12 13 11.4 13 C9.8 13 8.4 12.5 7.6 11.6" fill="none" stroke="#555" stroke-width="1.3"/></svg>
<div class="t" style="left:620.5px;top:859.77px;font-size:14.5px;color:#454545;transform:scaleX(0.7650);">96159</div>
<div class="t" style="left:692.5px;top:859.77px;font-size:14.5px;color:#454545;transform:scaleX(0.7650);">BNL 03TLB-Zuid</div>
<div class="t" style="left:828.8px;top:859.77px;font-size:14.5px;color:#454545;transform:scaleX(0.7650);">Hans Rutjes</div>
<div class="t" style="left:924.2px;top:859.77px;font-size:14.5px;color:#454545;transform:scaleX(0.7650);">174-38-BFG-2</div>
<div class="t" style="left:1018.5px;top:859.77px;font-size:14.5px;color:#454545;transform:scaleX(0.7650);">Dennis</div>
<div class="t" style="left:1140.5px;top:859.77px;font-size:14.5px;color:#454545;transform:scaleX(0.7650);">14:58</div>
<div class="t" style="left:1282.5px;top:859.77px;font-size:14.5px;color:#454545;transform:scaleX(0.7900);">Maar inderdaad zometeen als eesrte richting Amorim</div>
<div class="t" style="left:1732.7px;top:859.77px;font-size:14.5px;color:#454545;transform:scaleX(0.7649);">22-03-2023 14:58:56</div>
<svg style="position:absolute;left:384.3px;top:891px" width="14" height="14" viewBox="0 0 14 14"><path d="M0.5 0.3 L13 7 L0.5 13.7 V9 L7 7 L0.5 5Z" fill="#5a8ff0"/></svg>
<svg style="position:absolute;left:408.3px;top:891.2px" width="16" height="12" viewBox="0 0 16 12"><path d="M0.8 6.5 L4 10.5 L10.5 1 M5.5 7.5 L7 10.5 L15 1" fill="none" stroke="#3ee83a" stroke-width="1.7"/></svg>
<div style="position:absolute;left:788.8px;top:888.2px;width:30px;height:27px;border:1.4px solid #80868c;border-radius:5px;background:#fff"></div>
<svg style="position:absolute;left:794.8px;top:893.7px" width="18" height="16" viewBox="0 0 18 16"><path d="M7.5 2.5 C4 2.5 1.6 4.6 1.6 7 C1.6 8.3 2.3 9.4 3.4 10.2 L2.8 12.6 L5.6 11.2 C6.2 11.4 6.8 11.5 7.5 11.5 C11 11.5 13.4 9.4 13.4 7 C13.4 4.6 11 2.5 7.5 2.5Z" fill="#fff" stroke="#555" stroke-width="1.3"/><path d="M14.2 6.2 C15.6 6.9 16.4 8 16.4 9.3 C16.4 10.3 15.9 11.2 15.1 11.8 L15.6 14 L13 12.8 C12.5 12.9 12 13 11.4 13 C9.8 13 8.4 12.5 7.6 11.6" fill="none" stroke="#555" stroke-width="1.3"/></svg>
<div class="t" style="left:620.5px;top:891.88px;font-size:14.5px;color:#454545;transform:scaleX(0.7650);">3285</div>
<div class="t" style="left:692.5px;top:891.88px;font-size:14.5px;color:#454545;transform:scaleX(0.7650);">BNL 01TLB-Noord</div>
<div class="t" style="left:828.8px;top:891.88px;font-size:14.5px;color:#454545;transform:scaleX(0.7650);">Ludo Vosters</div>
<div class="t" style="left:924.2px;top:891.88px;font-size:14.5px;color:#454545;transform:scaleX(0.7650);">196-11-BGZ-8</div>
<div class="t" style="left:1018.5px;top:891.88px;font-size:14.5px;color:#454545;transform:scaleX(0.7650);">Harm</div>
<div class="t" style="left:1140.5px;top:891.88px;font-size:14.5px;color:#454545;transform:scaleX(0.7650);">14:58</div>
<div class="t" style="left:1282.5px;top:891.88px;font-size:14.5px;color:#454545;transform:scaleX(0.7900);">okeee,gaat sassenheim voor 4 uur lukken denkje</div>
<div class="t" style="left:1732.7px;top:891.88px;font-size:14.5px;color:#454545;transform:scaleX(0.7649);">22-03-2023 14:58:31</div>
<svg style="position:absolute;left:385.6px;top:922.6px" width="14" height="13" viewBox="0 0 14 13"><path d="M12.6 0.3 L0.5 6.4 L12.6 12.6 V8.6 L5.5 6.4 L12.6 4.3Z" fill="#4f9a1f"/></svg>
<svg style="position:absolute;left:408.3px;top:922.6px" width="16" height="12" viewBox="0 0 16 12"><path d="M0.8 6.5 L4 10.5 L10.5 1 M5.5 7.5 L7 10.5 L15 1" fill="none" stroke="#3ee83a" stroke-width="1.7"/></svg>
<div style="position:absolute;left:458px;top:922px;width:2.6px;height:8.2px;background:#555;border-radius:1px"></div>
<div style="position:absolute;left:458px;top:931.8px;width:2.6px;height:2.6px;background:#555"></div>
<div style="position:absolute;left:788.8px;top:919.6px;width:30px;height:27px;border:1.4px solid #80868c;border-radius:5px;background:#fff"></div>
<svg style="position:absolute;left:794.8px;top:925.1px" width="18" height="16" viewBox="0 0 18 16"><path d="M7.5 2.5 C4 2.5 1.6 4.6 1.6 7 C1.6 8.3 2.3 9.4 3.4 10.2 L2.8 12.6 L5.6 11.2 C6.2 11.4 6.8 11.5 7.5 11.5 C11 11.5 13.4 9.4 13.4 7 C13.4 4.6 11 2.5 7.5 2.5Z" fill="#fff" stroke="#555" stroke-width="1.3"/><path d="M14.2 6.2 C15.6 6.9 16.4 8 16.4 9.3 C16.4 10.3 15.9 11.2 15.1 11.8 L15.6 14 L13 12.8 C12.5 12.9 12 13 11.4 13 C9.8 13 8.4 12.5 7.6 11.6" fill="none" stroke="#555" stroke-width="1.3"/></svg>
<div class="t" style="left:620.5px;top:923.27px;font-size:14.5px;color:#454545;transform:scaleX(0.7650);">91214</div>
<div class="t" style="left:692.5px;top:923.27px;font-size:14.5px;color:#454545;transform:scaleX(0.7650);">BNL 05TLB-</div>
<div class="t" style="left:692.5px;top:943.57px;font-size:14.5px;color:#454545;transform:scaleX(0.7650);">Koppelen</div>
<div class="t" style="left:828.8px;top:923.27px;font-size:14.5px;color:#454545;transform:scaleX(0.7650);">Robin Pullen</div>
<div class="t" style="left:924.2px;top:923.27px;font-size:14.5px;color:#454545;transform:scaleX(0.7650);">170-08-BDP-7</div>
<div class="t" style="left:1140.5px;top:923.27px;font-size:14.5px;color:#454545;transform:scaleX(0.7650);">14:57:</div>
<div class="t" style="left:1282.5px;top:923.27px;font-size:14.5px;color:#454545;transform:scaleX(0.7900);">is goed</div>
<div class="t" style="left:1732.7px;top:923.27px;font-size:14.5px;color:#454545;transform:scaleX(0.7649);">22-03-2023 14:57:54</div>
<svg style="position:absolute;left:384.3px;top:969.3px" width="14" height="14" viewBox="0 0 14 14"><path d="M0.5 0.3 L13 7 L0.5 13.7 V9 L7 7 L0.5 5Z" fill="#5a8ff0"/></svg>
<svg style="position:absolute;left:408.3px;top:969.5px" width="16" height="12" viewBox="0 0 16 12"><path d="M0.8 6.5 L4 10.5 L10.5 1 M5.5 7.5 L7 10.5 L15 1" fill="none" stroke="#3ee83a" stroke-width="1.7"/></svg>
<div style="position:absolute;left:788.8px;top:966.5px;width:30px;height:27px;border:1.4px solid #80868c;border-radius:5px;background:#fff"></div>
<svg style="position:absolute;left:794.8px;top:972px" width="18" height="16" viewBox="0 0 18 16"><path d="M7.5 2.5 C4 2.5 1.6 4.6 1.6 7 C1.6 8.3 2.3 9.4 3.4 10.2 L2.8 12.6 L5.6 11.2 C6.2 11.4 6.8 11.5 7.5 11.5 C11 11.5 13.4 9.4 13.4 7 C13.4 4.6 11 2.5 7.5 2.5Z" fill="#fff" stroke="#555" stroke-width="1.3"/><path d="M14.2 6.2 C15.6 6.9 16.4 8 16.4 9.3 C16.4 10.3 15.9 11.2 15.1 11.8 L15.6 14 L13 12.8 C12.5 12.9 12 13 11.4 13 C9.8 13 8.4 12.5 7.6 11.6" fill="none" stroke="#555" stroke-width="1.3"/></svg>
<div class="t" style="left:620.5px;top:970.17px;font-size:14.5px;color:#454545;transform:scaleX(0.7650);">91214</div>
<div class="t" style="left:692.5px;top:970.17px;font-size:14.5px;color:#454545;transform:scaleX(0.7650);">BNL 05TLB-</div>
<div class="t" style="left:692.5px;top:990.47px;font-size:14.5px;color:#454545;transform:scaleX(0.7650);">Koppelen</div>
<div class="t" style="left:828.8px;top:970.17px;font-size:14.5px;color:#454545;transform:scaleX(0.7650);">Robin Pullen</div>
<div class="t" style="left:924.2px;top:970.17px;font-size:14.5px;color:#454545;transform:scaleX(0.7650);">170-08-BDP-7</div>
<div class="t" style="left:1018.5px;top:970.17px;font-size:14.5px;color:#454545;transform:scaleX(0.7650);">Wilmer</div>
<div class="t" style="left:1140.5px;top:970.17px;font-size:14.5px;color:#454545;transform:scaleX(0.7650);">14:57:</div>
<div class="t" style="left:1282.5px;top:970.17px;font-size:14.5px;color:#454545;transform:scaleX(0.7900);">Als gij het goed vindt dan mag je afsluiten voor vandaag. Wilmer</div>
<div class="t" style="left:1732.7px;top:970.17px;font-size:14.5px;color:#454545;transform:scaleX(0.7649);">22-03-2023 14:57:36</div>
<svg style="position:absolute;left:384.3px;top:1014.9px" width="14" height="14" viewBox="0 0 14 14"><path d="M0.5 0.3 L13 7 L0.5 13.7 V9 L7 7 L0.5 5Z" fill="#5a8ff0"/></svg>
<svg style="position:absolute;left:408.3px;top:1015.1px" width="16" height="12" viewBox="0 0 16 12"><path d="M0.8 6.5 L4 10.5 L10.5 1 M5.5 7.5 L7 10.5 L15 1" fill="none" stroke="#3ee83a" stroke-width="1.7"/></svg>
<div style="position:absolute;left:788.8px;top:1012.1px;width:30px;height:27px;border:1.4px solid #80868c;border-radius:5px;background:#fff"></div>
<svg style="position:absolute;left:794.8px;top:1017.6px" width="18" height="16" viewBox="0 0 18 16"><path d="M7.5 2.5 C4 2.5 1.6 4.6 1.6 7 C1.6 8.3 2.3 9.4 3.4 10.2 L2.8 12.6 L5.6 11.2 C6.2 11.4 6.8 11.5 7.5 11.5 C11 11.5 13.4 9.4 13.4 7 C13.4 4.6 11 2.5 7.5 2.5Z" fill="#fff" stroke="#555" stroke-width="1.3"/><path d="M14.2 6.2 C15.6 6.9 16.4 8 16.4 9.3 C16.4 10.3 15.9 11.2 15.1 11.8 L15.6 14 L13 12.8 C12.5 12.9 12 13 11.4 13 C9.8 13 8.4 12.5 7.6 11.6" fill="none" stroke="#555" stroke-width="1.3"/></svg>
<div class="t" style="left:620.5px;top:1015.77px;font-size:14.5px;color:#454545;transform:scaleX(0.7650);">96169</div>
<div class="t" style="left:692.5px;top:1015.77px;font-size:14.5px;color:#454545;transform:scaleX(0.7650);">BNL 05TLB-</div>
<div class="t" style="left:692.5px;top:1036.07px;font-size:14.5px;color:#454545;transform:scaleX(0.7650);">Koppelen</div>
<div class="t" style="left:828.8px;top:1015.77px;font-size:14.5px;color:#454545;transform:scaleX(0.7650);">Jan Pol, van de</div>
<div class="t" style="left:924.2px;top:1015.77px;font-size:14.5px;color:#454545;transform:scaleX(0.7650);">195-81-BGZ-4</div>
<div class="t" style="left:1018.5px;top:1015.77px;font-size:14.5px;color:#454545;transform:scaleX(0.7650);">Hans</div>
<div class="t" style="left:1140.5px;top:1015.77px;font-size:14.5px;color:#454545;transform:scaleX(0.7650);">14:57:</div>
<div class="t" style="left:1282.5px;top:1015.77px;font-size:14.5px;color:#454545;transform:scaleX(0.7900);">hoi jan, ik heb 10 pallets nij nooteboom en daarna d4r te laden. ik zet ze in je rit</div>
<div class="t" style="left:1732.7px;top:1015.77px;font-size:14.5px;color:#454545;transform:scaleX(0.7649);">22-03-2023 14:57:24</div>
<div style="position:absolute;left:371px;top:1041.5px;width:1493px;height:38.5px;background:#fff"></div>
<div style="position:absolute;left:380px;top:1042.7px;width:1475px;height:17px;background:#f1f1f1"></div>
<div style="position:absolute;left:396px;top:1044.5px;width:1181px;height:13.2px;background:#c1c1c1"></div>
<svg style="position:absolute;left:384px;top:1047px" width="6" height="8" viewBox="0 0 6 8"><path d="M5.5 0.5 L0.5 4 L5.5 7.5Z" fill="#a3a3a3"/></svg>
<svg style="position:absolute;left:1828px;top:1047px" width="6" height="8" viewBox="0 0 6 8"><path d="M0.5 0.5 L5.5 4 L0.5 7.5Z" fill="#505050"/></svg>
<div style="position:absolute;left:1839.8px;top:1042.7px;width:15px;height:17px;background:#dcdcdc"></div>
<div style="position:absolute;left:1839.8px;top:689px;width:14.6px;height:353px;background:#f1f1f1"></div>
<div style="position:absolute;left:1841px;top:708px;width:12px;height:19.5px;background:#c1c1c1"></div>
<svg style="position:absolute;left:1843px;top:694px" width="9" height="6" viewBox="0 0 9 6"><path d="M0.5 5.5 L4.5 0.5 L8.5 5.5Z" fill="#a3a3a3"/></svg>
<svg style="position:absolute;left:1843px;top:1027px" width="9" height="6" viewBox="0 0 9 6"><path d="M0.5 0.5 L4.5 5.5 L8.5 0.5Z" fill="#505050"/></svg>
<svg style="position:absolute;left:1220px;top:169.5px" width="44" height="50" viewBox="-22 -25 44 50"><g transform="scale(0.822,1)"><circle cx="0" cy="0" r="22.5" fill="#fbfbfb"/><path d="M0.00 -20.10 A20.10 20.10 0 1 1 -18.22 8.49" fill="none" stroke="#1ef01b" stroke-width="5.8"/><path d="M-18.22 8.49 A20.10 20.10 0 0 1 -0.00 -20.10" fill="none" stroke="#7d0a84" stroke-width="5.8"/></g></svg>
<div class="t" style="left:1238.7px;top:187.25px;font-size:15px;color:#333;transform:scaleX(0.7910);">7</div>
<svg style="position:absolute;left:1088.3px;top:218px" width="44" height="50" viewBox="-22 -25 44 50"><g transform="scale(0.822,1)"><circle cx="0" cy="0" r="22.5" fill="#fbfbfb"/><path d="M0.00 -20.10 A20.10 20.10 0 1 1 -16.46 11.53" fill="none" stroke="#1ef01b" stroke-width="5.8"/><path d="M-16.46 11.53 A20.10 20.10 0 0 1 -0.00 -20.10" fill="none" stroke="#7d0a84" stroke-width="5.8"/></g></svg>
<div class="t" style="left:1107px;top:235.75px;font-size:15px;color:#333;transform:scaleX(0.7910);">3</div>
<svg style="position:absolute;left:1164px;top:283px" width="44" height="50" viewBox="-22 -25 44 50"><g transform="scale(0.822,1)"><circle cx="0" cy="0" r="22.5" fill="#fbfbfb"/><path d="M0.00 -20.10 A20.10 20.10 0 0 1 0.00 20.10" fill="none" stroke="#1ef01b" stroke-width="5.8"/><path d="M0.00 20.10 A20.10 20.10 0 0 1 -17.41 -10.05" fill="none" stroke="#7d0a84" stroke-width="5.8"/><path d="M-17.41 -10.05 A20.10 20.10 0 0 1 -0.00 -20.10" fill="none" stroke="#0a0af0" stroke-width="5.8"/></g></svg>
<div class="t" style="left:1179.8px;top:300.75px;font-size:15px;color:#333;transform:scaleX(0.7431);">10</div>
<svg style="position:absolute;left:1059.3px;top:314.4px" width="44" height="50" viewBox="-22 -25 44 50"><g transform="scale(0.822,1)"><circle cx="0" cy="0" r="22.5" fill="#fbfbfb"/><circle cx="0" cy="0" r="20.1" fill="none" stroke="#1ef01b" stroke-width="5.8"/></g></svg>
<div class="t" style="left:1078px;top:332.15px;font-size:15px;color:#333;transform:scaleX(0.7910);">8</div>
<svg style="position:absolute;left:1112px;top:366.3px" width="44" height="50" viewBox="-22 -25 44 50"><g transform="scale(0.822,1)"><circle cx="0" cy="0" r="22.5" fill="#fbfbfb"/><path d="M1.05 -20.07 A20.10 20.10 0 1 1 -12.37 15.84" fill="none" stroke="#1ef01b" stroke-width="5.8"/><path d="M-12.37 15.84 A20.10 20.10 0 0 1 -2.10 -19.99" fill="none" stroke="#7d0a84" stroke-width="5.8"/><path d="M-2.10 -19.99 A20.10 20.10 0 0 1 1.05 -20.07" fill="none" stroke="#ee1010" stroke-width="5.8"/></g></svg>
<div class="t" style="left:1127.8px;top:384.05px;font-size:15px;color:#333;transform:scaleX(0.7431);">45</div>
<svg style="position:absolute;left:1011px;top:457px" width="44" height="50" viewBox="-22 -25 44 50"><g transform="scale(0.822,1)"><circle cx="0" cy="0" r="22.5" fill="#fbfbfb"/><path d="M0.00 -20.10 A20.10 20.10 0 1 1 -6.87 18.89" fill="none" stroke="#1ef01b" stroke-width="5.8"/><path d="M-6.87 18.89 A20.10 20.10 0 0 1 -17.41 -10.05" fill="none" stroke="#7d0a84" stroke-width="5.8"/><path d="M-17.41 -10.05 A20.10 20.10 0 0 1 -0.00 -20.10" fill="none" stroke="#0a0af0" stroke-width="5.8"/></g></svg>
<div class="t" style="left:1029.7px;top:474.75px;font-size:15px;color:#333;transform:scaleX(0.7910);">7</div>
<svg style="position:absolute;left:1190.5px;top:444.8px" width="44" height="50" viewBox="-22 -25 44 50"><g transform="scale(0.822,1)"><circle cx="0" cy="0" r="22.5" fill="#fbfbfb"/><circle cx="0" cy="0" r="20.1" fill="none" stroke="#1ef01b" stroke-width="5.8"/></g></svg>
<div class="t" style="left:1209.2px;top:462.55px;font-size:15px;color:#333;transform:scaleX(0.7910);">4</div>
<div style="position:absolute;left:380px;top:82.7px;width:34px;height:41.3px;background:#fff;border:1.5px solid #d8d8d8;border-radius:5px"></div>
<svg style="position:absolute;left:381px;top:86px" width="32" height="36" viewBox="0 0 32 36"><g fill="none" stroke="#6a6a6a" stroke-width="2.2" stroke-linejoin="round"><path d="M2.5 13.5 L15.5 5 L28.5 13.5 L15.5 22Z"/><path d="M2.5 20 L15.5 28.5 L28.5 20"/></g></svg>
<div style="position:absolute;left:380px;top:135.8px;width:34px;height:37.6px;background:#fff;border:1.5px solid #d8d8d8;border-radius:5px"></div>
<svg style="position:absolute;left:381px;top:137px" width="32" height="36" viewBox="0 0 32 36"><g fill="none" stroke="#6a6a6a"><ellipse cx="14" cy="15" rx="9.6" ry="11.5" stroke-width="2.4"/><path d="M21.5 24.5 L26.5 30.5" stroke-width="4" stroke-linecap="round"/></g></svg>
<svg style="position:absolute;left:1830px;top:72px" width="40" height="38" viewBox="1830 72 40 38"><ellipse cx="1855.5" cy="92.5" rx="10.5" ry="10.3" fill="#666c73"/><path d="M1859 99 L1866 105 L1856 102Z" fill="#666c73"/><ellipse cx="1849" cy="87" rx="13.2" ry="12" fill="#e6eee0"/><ellipse cx="1849" cy="87" rx="11.8" ry="10.7" fill="#666c73"/><path d="M1841.5 93 L1840 100.5 L1848.5 96.5Z" fill="#666c73"/></svg>
<div style="position:absolute;left:1673px;top:585.3px;width:191px;height:19.4px;background:rgba(255,255,255,0.8)"></div>
<div class="t" style="left:1677.5px;top:588.38px;font-size:12.5px;color:#2a82c8;transform:scaleX(0.8393);">Leaflet</div>
<div class="t" style="left:1711px;top:588.38px;font-size:12.5px;color:#666;transform:scaleX(0.8000);">|</div>
<div style="position:absolute;left:1717.5px;top:591px;width:8.5px;height:9px;border:1.4px solid #555;border-radius:50%"></div>
<div class="t" style="left:1728.5px;top:588.38px;font-size:12.5px;color:#2a82c8;transform:scaleX(0.8215);">OpenStreetMap</div>
<div class="t" style="left:1804px;top:588.38px;font-size:12.5px;color:#444;transform:scaleX(0.8421);">contributors</div>
</body></html>
